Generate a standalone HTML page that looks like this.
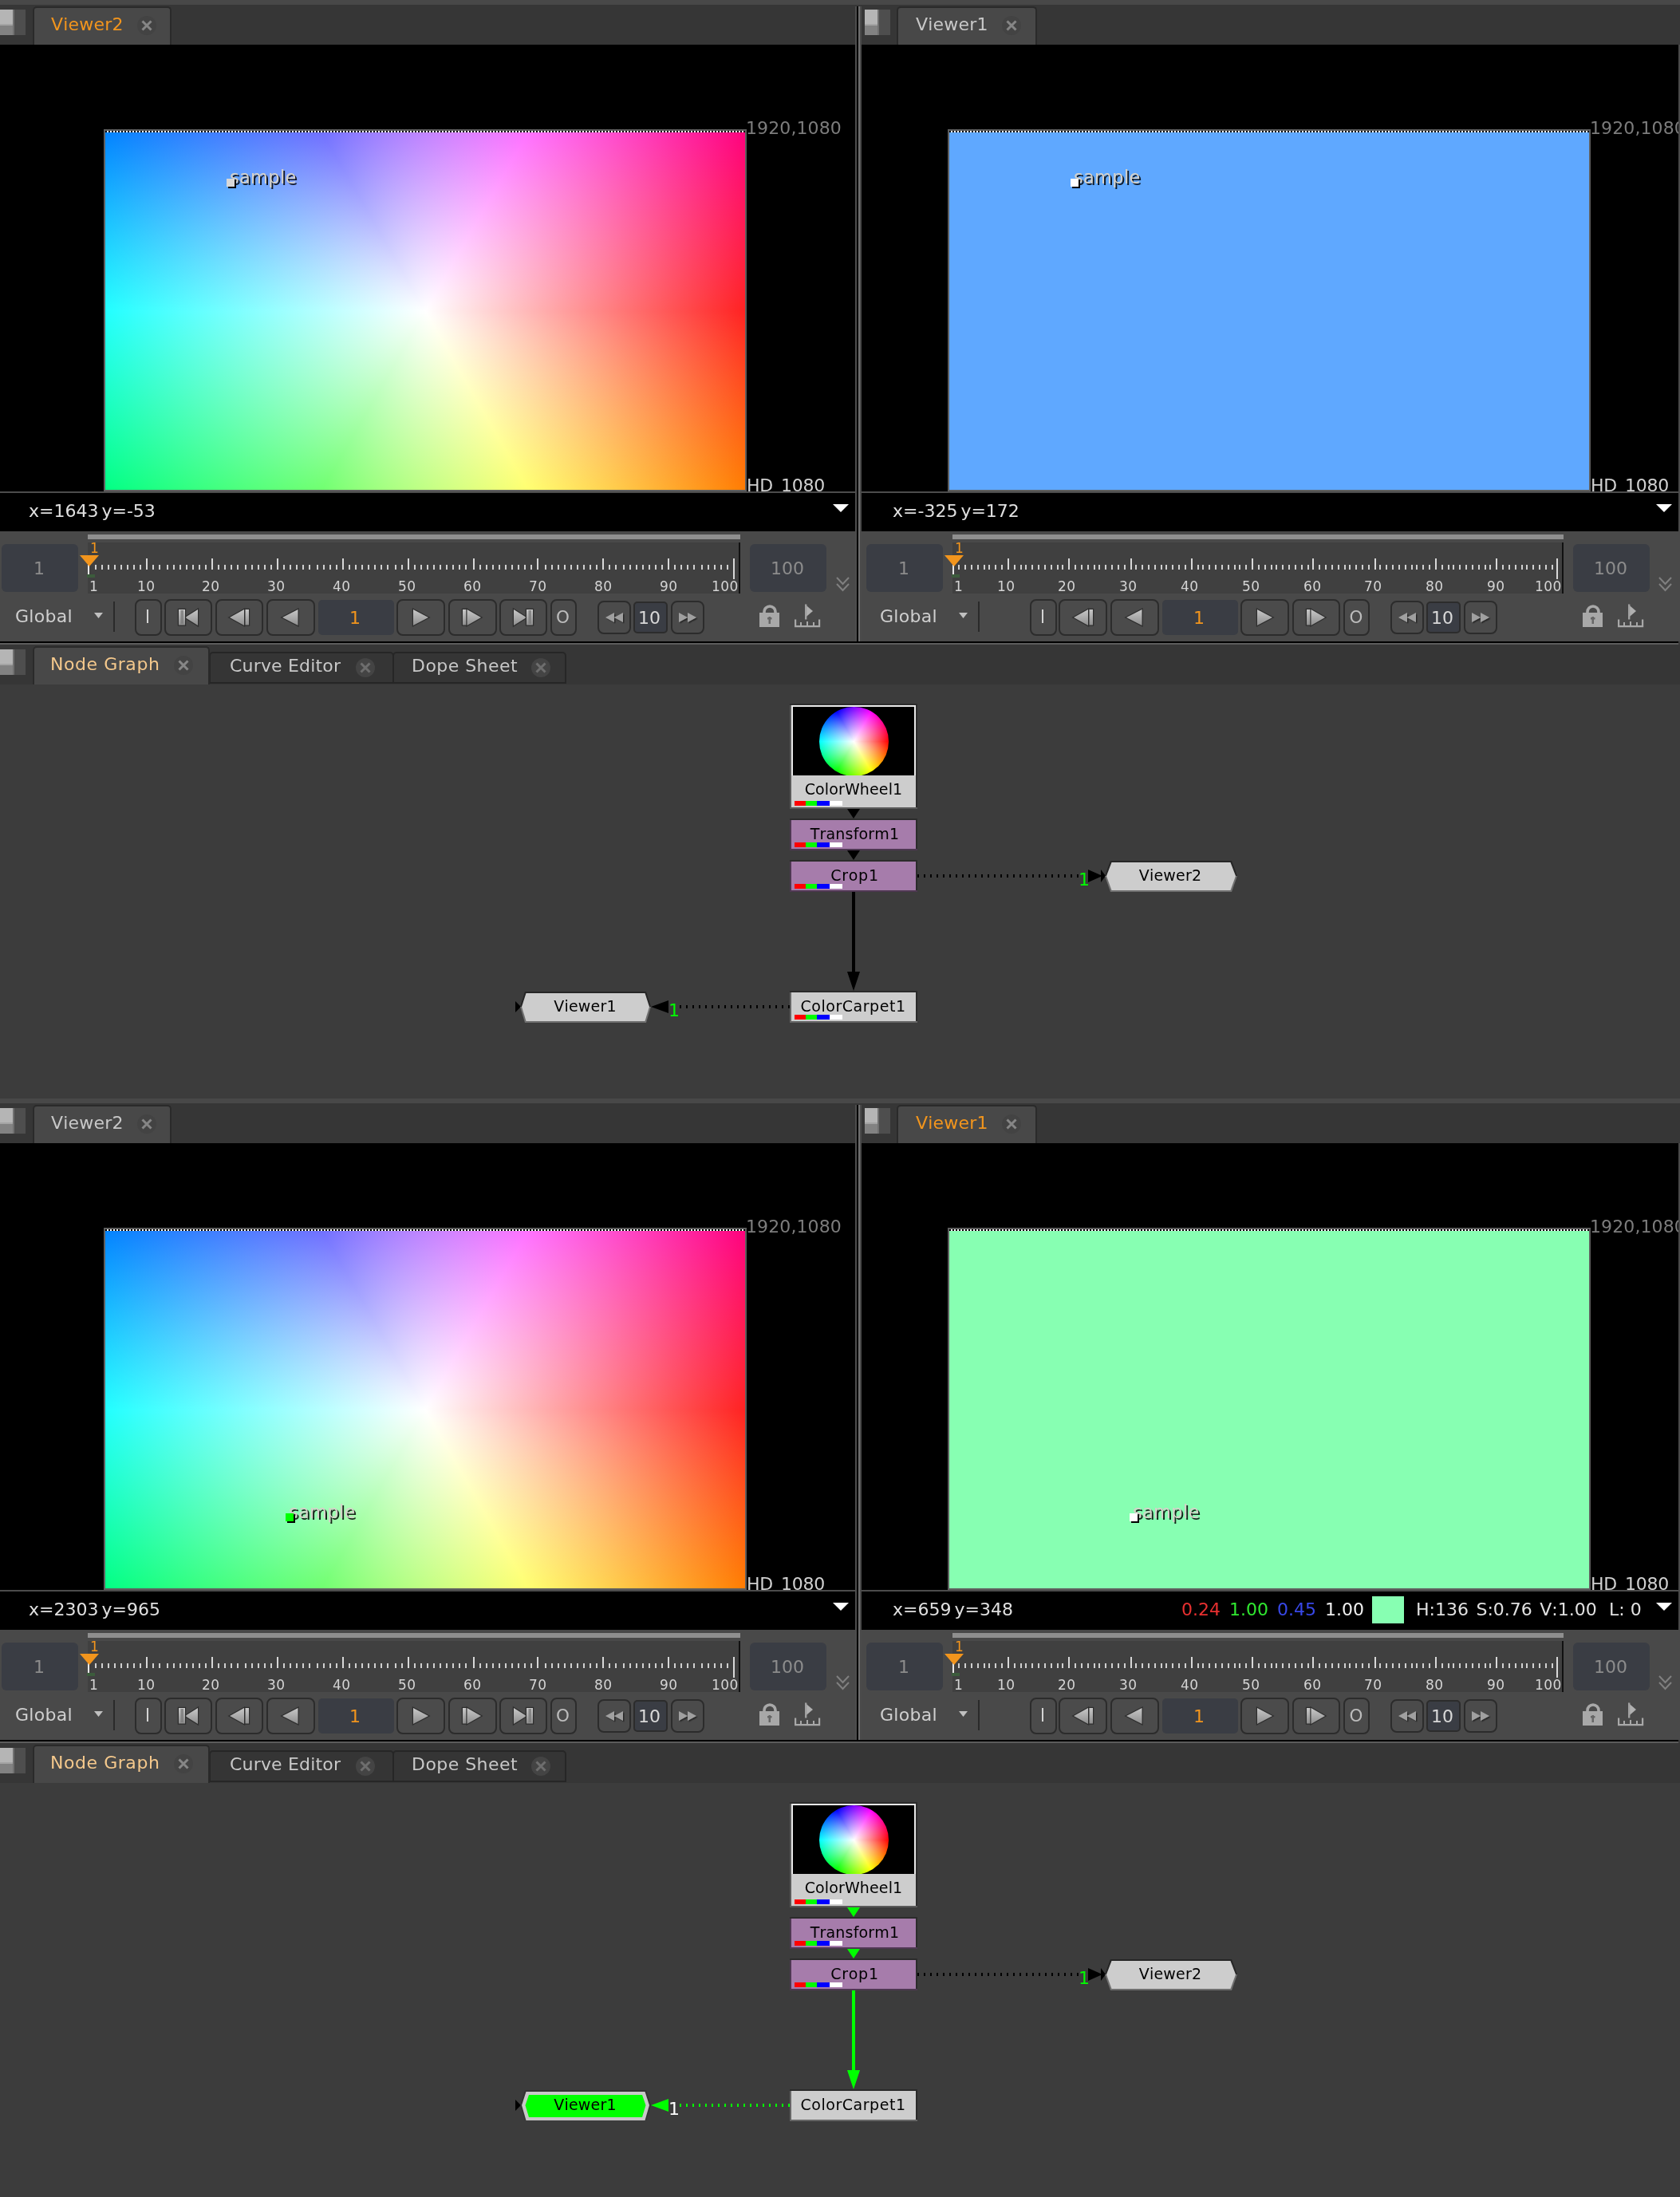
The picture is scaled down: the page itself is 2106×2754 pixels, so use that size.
<!DOCTYPE html>
<html><head><meta charset="utf-8"><title>Natron</title>
<style>
html,body{margin:0;padding:0;background:#3c3c3c;}
body{width:2106px;height:2754px;overflow:hidden;position:relative;font-family:"DejaVu Sans","Liberation Sans",sans-serif;}
.half{will-change:transform;position:absolute;left:0;width:2106px;height:1377px;overflow:hidden;}
.half div,.half span,.half>svg{position:absolute;}
.half span{line-height:1;white-space:pre;font-kerning:none;}
text{font-kerning:none}
svg{overflow:visible}
</style></head><body>
<svg width="0" height="0" style="position:absolute"><defs><linearGradient id="ig" x1="0" y1="0" x2="0" y2="1"><stop offset="0" stop-color="#c8c8c8"/><stop offset="1" stop-color="#8e8e8e"/></linearGradient>
<filter id="sh" x="-20%" y="-20%" width="150%" height="150%"><feDropShadow dx="1.5" dy="1.5" stdDeviation="0.6" flood-color="#222" flood-opacity="0.9"/></filter>
</defs></svg>
<div class="half" style="top:0"><div style="left:0px;top:0px;width:2106px;height:6px;background:#484848"></div><div style="left:0px;top:6px;width:2106px;height:50px;background:#363636"></div><div style="left:0px;top:56px;width:1072px;height:610px;background:#000"></div><div style="left:1080px;top:56px;width:1024px;height:610px;background:#000"></div><div style="left:0px;top:666px;width:2106px;height:138px;background:#494949"></div><div style="left:2104px;top:56px;width:2px;height:610px;background:#494949"></div><div style="left:130px;top:162px;width:806px;height:454px;background:#5e5e5e"></div><div style="left:132px;top:164px;width:802px;height:2px;background:repeating-linear-gradient(90deg,#000 0 2px,#fff 2px 4px)"></div><div style="left:132px;top:166px;width:802px;height:448px;background:radial-gradient(circle 463px at 401px 224px,#fff 0,rgba(255,255,255,0) 100%),conic-gradient(from 90deg at 401px 224px,#f00,#ff0,#0f0,#0ff,#00f,#f0f,#f00)"></div><div style="left:1188px;top:162px;width:806px;height:454px;background:#5e5e5e"></div><div style="left:1190px;top:164px;width:802px;height:2px;background:repeating-linear-gradient(90deg,#000 0 2px,#fff 2px 4px)"></div><div style="left:1190px;top:166px;width:802px;height:448px;background:#5fa8ff"></div><span style="left:935px;top:150.40px;font-size:22px;color:#7c7c7c;letter-spacing:0.1px;">1920,1080</span><span style="left:936px;top:598.40px;font-size:22px;color:#d0d0d0;word-spacing:3px;letter-spacing:-0.2px;">HD 1080</span><div style="left:1993px;top:140px;width:111px;height:40px;overflow:hidden"><span style="left:0;top:10.40px;font-size:22px;color:#7c7c7c;letter-spacing:0.1px">1920,1080</span></div><span style="left:1994px;top:598.40px;font-size:22px;color:#d0d0d0;word-spacing:3px;letter-spacing:-0.2px;">HD 1080</span><div style="left:0px;top:616px;width:1072px;height:2px;background:#4c4c4c"></div><div style="left:1080px;top:616px;width:1024px;height:2px;background:#4c4c4c"></div><span style="left:36px;top:630.40px;font-size:22px;color:#e0e0e0;word-spacing:-3px;">x=1643 y=-53</span><span style="left:1119px;top:630.40px;font-size:22px;color:#e0e0e0;word-spacing:-3px;">x=-325 y=172</span><svg style="left:1044px;top:632px" width="20" height="10" viewBox="0 0 20 10"><path d="M0 0H20L10.0 10Z" fill="#fff"/></svg><svg style="left:2076px;top:632px" width="20" height="10" viewBox="0 0 20 10"><path d="M0 0H20L10.0 10Z" fill="#fff"/></svg><span style="left:288px;top:211.00px;font-size:22.5px;color:#d6d2ca;text-shadow:2px 2px 0 rgba(0,0,0,0.85);letter-spacing:0.3px;">sample</span><div style="left:286px;top:226px;width:10px;height:10px;background:#000"></div><div style="left:284px;top:224px;width:10px;height:10px;background:#d8d8d8"></div><span style="left:1346px;top:211.00px;font-size:22.5px;color:#d6d2ca;text-shadow:2px 2px 0 rgba(0,0,0,0.85);letter-spacing:0.3px;">sample</span><div style="left:1344px;top:226px;width:10px;height:10px;background:#000"></div><div style="left:1342px;top:224px;width:10px;height:10px;background:#fff"></div><div style="left:1072px;top:8px;width:2px;height:796px;background:#4d4d4d"></div><div style="left:1074px;top:8px;width:2px;height:796px;background:#000"></div><div style="left:1076px;top:8px;width:2px;height:796px;background:#6e6e6e"></div><div style="left:1078px;top:8px;width:2px;height:796px;background:#4a4a4a"></div><div style="left:0px;top:12px;width:16px;height:20px;background:#b5b5b5"></div><div style="left:0px;top:30px;width:16px;height:2px;background:#a4a4a4"></div><div style="left:0px;top:32px;width:16px;height:12px;background:#828282"></div><div style="left:16px;top:12px;width:2px;height:32px;background:#707070"></div><div style="left:18px;top:12px;width:14px;height:32px;background:#4e4e4e"></div><div style="left:1084px;top:12px;width:16px;height:20px;background:#b5b5b5"></div><div style="left:1084px;top:30px;width:16px;height:2px;background:#a4a4a4"></div><div style="left:1084px;top:32px;width:16px;height:12px;background:#828282"></div><div style="left:1100px;top:12px;width:2px;height:32px;background:#707070"></div><div style="left:1102px;top:12px;width:14px;height:32px;background:#4e4e4e"></div><div style="left:41px;top:8px;width:174px;height:48px;box-sizing:border-box;background:#484848;border:2px solid #2a2a2a;border-bottom:none;border-radius:5px 5px 0 0"></div><span style="left:64px;top:20.40px;font-size:22px;color:#f2951d;letter-spacing:0.2px;">Viewer2</span><svg style="left:170px;top:18px" width="28" height="28" viewBox="0 0 28 28"><circle cx="14" cy="14" r="12" fill="#434343"/><path d="M8.5 8.5L19.5 19.5M19.5 8.5L8.5 19.5" stroke="#868686" stroke-width="3" fill="none"/></svg><div style="left:1124px;top:8px;width:176px;height:48px;box-sizing:border-box;background:#484848;border:2px solid #2a2a2a;border-bottom:none;border-radius:5px 5px 0 0"></div><span style="left:1148px;top:20.40px;font-size:22px;color:#c8c8c8;letter-spacing:0.2px;">Viewer1</span><svg style="left:1254px;top:18px" width="28" height="28" viewBox="0 0 28 28"><circle cx="14" cy="14" r="12" fill="#434343"/><path d="M8.5 8.5L19.5 19.5M19.5 8.5L8.5 19.5" stroke="#868686" stroke-width="3" fill="none"/></svg><div style="left:2px;top:682px;width:96px;height:60px;background:#3a3d44;border-radius:6px"></div><span style="left:-151px;width:400px;text-align:center;top:702.40px;font-size:22px;color:#8c8c8c;">1</span><div style="left:110px;top:670px;width:818px;height:6px;background:#8f8f8f"></div><div style="left:110px;top:680px;width:818px;height:64px;background:#404040"></div><div style="left:926px;top:680px;width:2px;height:64px;background:#111"></div><svg style="left:110px;top:680px" width="818" height="64"><rect x="9" y="28" width="2" height="6" fill="#d0d0d0"/><rect x="17" y="28" width="2" height="6" fill="#d0d0d0"/><rect x="25" y="28" width="2" height="6" fill="#d0d0d0"/><rect x="33" y="28" width="2" height="6" fill="#d0d0d0"/><rect x="41" y="28" width="2" height="6" fill="#d0d0d0"/><rect x="49" y="28" width="2" height="6" fill="#d0d0d0"/><rect x="57" y="28" width="2" height="6" fill="#d0d0d0"/><rect x="65" y="28" width="2" height="6" fill="#d0d0d0"/><rect x="73" y="20" width="2" height="14" fill="#d8d8d8"/><rect x="81" y="28" width="2" height="6" fill="#d0d0d0"/><rect x="89" y="28" width="2" height="6" fill="#d0d0d0"/><rect x="99" y="28" width="2" height="6" fill="#d0d0d0"/><rect x="107" y="28" width="2" height="6" fill="#d0d0d0"/><rect x="115" y="28" width="2" height="6" fill="#d0d0d0"/><rect x="123" y="28" width="2" height="6" fill="#d0d0d0"/><rect x="131" y="28" width="2" height="6" fill="#d0d0d0"/><rect x="139" y="28" width="2" height="6" fill="#d0d0d0"/><rect x="147" y="28" width="2" height="6" fill="#d0d0d0"/><rect x="155" y="20" width="2" height="14" fill="#d8d8d8"/><rect x="163" y="28" width="2" height="6" fill="#d0d0d0"/><rect x="171" y="28" width="2" height="6" fill="#d0d0d0"/><rect x="179" y="28" width="2" height="6" fill="#d0d0d0"/><rect x="187" y="28" width="2" height="6" fill="#d0d0d0"/><rect x="197" y="28" width="2" height="6" fill="#d0d0d0"/><rect x="205" y="28" width="2" height="6" fill="#d0d0d0"/><rect x="213" y="28" width="2" height="6" fill="#d0d0d0"/><rect x="221" y="28" width="2" height="6" fill="#d0d0d0"/><rect x="229" y="28" width="2" height="6" fill="#d0d0d0"/><rect x="237" y="20" width="2" height="14" fill="#d8d8d8"/><rect x="245" y="28" width="2" height="6" fill="#d0d0d0"/><rect x="253" y="28" width="2" height="6" fill="#d0d0d0"/><rect x="261" y="28" width="2" height="6" fill="#d0d0d0"/><rect x="269" y="28" width="2" height="6" fill="#d0d0d0"/><rect x="277" y="28" width="2" height="6" fill="#d0d0d0"/><rect x="287" y="28" width="2" height="6" fill="#d0d0d0"/><rect x="295" y="28" width="2" height="6" fill="#d0d0d0"/><rect x="303" y="28" width="2" height="6" fill="#d0d0d0"/><rect x="311" y="28" width="2" height="6" fill="#d0d0d0"/><rect x="319" y="20" width="2" height="14" fill="#d8d8d8"/><rect x="327" y="28" width="2" height="6" fill="#d0d0d0"/><rect x="335" y="28" width="2" height="6" fill="#d0d0d0"/><rect x="343" y="28" width="2" height="6" fill="#d0d0d0"/><rect x="351" y="28" width="2" height="6" fill="#d0d0d0"/><rect x="359" y="28" width="2" height="6" fill="#d0d0d0"/><rect x="367" y="28" width="2" height="6" fill="#d0d0d0"/><rect x="375" y="28" width="2" height="6" fill="#d0d0d0"/><rect x="385" y="28" width="2" height="6" fill="#d0d0d0"/><rect x="393" y="28" width="2" height="6" fill="#d0d0d0"/><rect x="401" y="20" width="2" height="14" fill="#d8d8d8"/><rect x="409" y="28" width="2" height="6" fill="#d0d0d0"/><rect x="417" y="28" width="2" height="6" fill="#d0d0d0"/><rect x="425" y="28" width="2" height="6" fill="#d0d0d0"/><rect x="433" y="28" width="2" height="6" fill="#d0d0d0"/><rect x="441" y="28" width="2" height="6" fill="#d0d0d0"/><rect x="449" y="28" width="2" height="6" fill="#d0d0d0"/><rect x="457" y="28" width="2" height="6" fill="#d0d0d0"/><rect x="465" y="28" width="2" height="6" fill="#d0d0d0"/><rect x="473" y="28" width="2" height="6" fill="#d0d0d0"/><rect x="483" y="20" width="2" height="14" fill="#d8d8d8"/><rect x="491" y="28" width="2" height="6" fill="#d0d0d0"/><rect x="499" y="28" width="2" height="6" fill="#d0d0d0"/><rect x="507" y="28" width="2" height="6" fill="#d0d0d0"/><rect x="515" y="28" width="2" height="6" fill="#d0d0d0"/><rect x="523" y="28" width="2" height="6" fill="#d0d0d0"/><rect x="531" y="28" width="2" height="6" fill="#d0d0d0"/><rect x="539" y="28" width="2" height="6" fill="#d0d0d0"/><rect x="547" y="28" width="2" height="6" fill="#d0d0d0"/><rect x="555" y="28" width="2" height="6" fill="#d0d0d0"/><rect x="563" y="20" width="2" height="14" fill="#d8d8d8"/><rect x="573" y="28" width="2" height="6" fill="#d0d0d0"/><rect x="581" y="28" width="2" height="6" fill="#d0d0d0"/><rect x="589" y="28" width="2" height="6" fill="#d0d0d0"/><rect x="597" y="28" width="2" height="6" fill="#d0d0d0"/><rect x="605" y="28" width="2" height="6" fill="#d0d0d0"/><rect x="613" y="28" width="2" height="6" fill="#d0d0d0"/><rect x="621" y="28" width="2" height="6" fill="#d0d0d0"/><rect x="629" y="28" width="2" height="6" fill="#d0d0d0"/><rect x="637" y="28" width="2" height="6" fill="#d0d0d0"/><rect x="645" y="20" width="2" height="14" fill="#d8d8d8"/><rect x="653" y="28" width="2" height="6" fill="#d0d0d0"/><rect x="661" y="28" width="2" height="6" fill="#d0d0d0"/><rect x="671" y="28" width="2" height="6" fill="#d0d0d0"/><rect x="679" y="28" width="2" height="6" fill="#d0d0d0"/><rect x="687" y="28" width="2" height="6" fill="#d0d0d0"/><rect x="695" y="28" width="2" height="6" fill="#d0d0d0"/><rect x="703" y="28" width="2" height="6" fill="#d0d0d0"/><rect x="711" y="28" width="2" height="6" fill="#d0d0d0"/><rect x="719" y="28" width="2" height="6" fill="#d0d0d0"/><rect x="727" y="20" width="2" height="14" fill="#d8d8d8"/><rect x="735" y="28" width="2" height="6" fill="#d0d0d0"/><rect x="743" y="28" width="2" height="6" fill="#d0d0d0"/><rect x="751" y="28" width="2" height="6" fill="#d0d0d0"/><rect x="759" y="28" width="2" height="6" fill="#d0d0d0"/><rect x="769" y="28" width="2" height="6" fill="#d0d0d0"/><rect x="777" y="28" width="2" height="6" fill="#d0d0d0"/><rect x="785" y="28" width="2" height="6" fill="#d0d0d0"/><rect x="793" y="28" width="2" height="6" fill="#d0d0d0"/><rect x="801" y="28" width="2" height="6" fill="#d0d0d0"/><rect x="809" y="20" width="2" height="26" fill="#d8d8d8"/></svg><div style="left:110px;top:708px;width:2px;height:14px;background:#e8e8e8"></div><div style="left:109px;top:720px;width:10px;height:4px;background:#3c5c3c"></div><svg style="left:100px;top:696px" width="24" height="14" viewBox="0 0 24 14"><path d="M0 0H24L12.0 14Z" fill="#f2951d"/></svg><span style="left:113px;top:679.40px;font-size:17px;color:#f2951d;">1</span><span style="left:112px;top:727.40px;font-size:17px;color:#d4d4d4;letter-spacing:0.4px;">1</span><span style="left:172px;top:727.40px;font-size:17px;color:#d4d4d4;letter-spacing:0.4px;">10</span><span style="left:253px;top:727.40px;font-size:17px;color:#d4d4d4;letter-spacing:0.4px;">20</span><span style="left:335px;top:727.40px;font-size:17px;color:#d4d4d4;letter-spacing:0.4px;">30</span><span style="left:417px;top:727.40px;font-size:17px;color:#d4d4d4;letter-spacing:0.4px;">40</span><span style="left:499px;top:727.40px;font-size:17px;color:#d4d4d4;letter-spacing:0.4px;">50</span><span style="left:581px;top:727.40px;font-size:17px;color:#d4d4d4;letter-spacing:0.4px;">60</span><span style="left:663px;top:727.40px;font-size:17px;color:#d4d4d4;letter-spacing:0.4px;">70</span><span style="left:745px;top:727.40px;font-size:17px;color:#d4d4d4;letter-spacing:0.4px;">80</span><span style="left:827px;top:727.40px;font-size:17px;color:#d4d4d4;letter-spacing:0.4px;">90</span><span style="left:892px;top:727.40px;font-size:17px;color:#d4d4d4;letter-spacing:0.4px;">100</span><div style="left:940px;top:682px;width:96px;height:60px;background:#3a3d44;border-radius:6px"></div><span style="left:787px;width:400px;text-align:center;top:702.40px;font-size:22px;color:#8c8c8c;">100</span><svg style="left:1048px;top:722px" width="18" height="22" viewBox="0 0 18 22"><path d="M1 2L8.5 10L16 2M1 10L8.5 18L16 10" fill="none" stroke="#808080" stroke-width="2"/></svg><span style="left:19px;top:762.40px;font-size:22px;color:#cfcfcf;letter-spacing:0.3px;">Global</span><svg style="left:118px;top:768px" width="11" height="7" viewBox="0 0 11 7"><path d="M0 0H11L5.5 7Z" fill="#c0c0c0"/></svg><div style="left:142px;top:754px;width:2px;height:38px;background:#2a2a2a"></div><div style="left:169px;top:751px;width:34px;height:46px;box-sizing:border-box;border:2px solid #2c2c2c;border-radius:8px;background:#4b4b4b"></div><div style="left:206px;top:751px;width:60px;height:46px;box-sizing:border-box;border:2px solid #2c2c2c;border-radius:8px;background:#4b4b4b"></div><div style="left:270px;top:751px;width:60px;height:46px;box-sizing:border-box;border:2px solid #2c2c2c;border-radius:8px;background:#4b4b4b"></div><div style="left:334px;top:751px;width:61px;height:46px;box-sizing:border-box;border:2px solid #2c2c2c;border-radius:8px;background:#4b4b4b"></div><div style="left:497px;top:751px;width:61px;height:46px;box-sizing:border-box;border:2px solid #2c2c2c;border-radius:8px;background:#4b4b4b"></div><div style="left:562px;top:751px;width:61px;height:46px;box-sizing:border-box;border:2px solid #2c2c2c;border-radius:8px;background:#4b4b4b"></div><div style="left:626px;top:751px;width:60px;height:46px;box-sizing:border-box;border:2px solid #2c2c2c;border-radius:8px;background:#4b4b4b"></div><div style="left:690px;top:751px;width:33px;height:46px;box-sizing:border-box;border:2px solid #2c2c2c;border-radius:8px;background:#4b4b4b"></div><div style="left:184px;top:764px;width:2px;height:17px;background:#d4d4d4"></div><svg style="left:220px;top:760px" width="40" height="28" viewBox="-4 -4 40 28"><path d="M24 0V20L8 10Z" fill="url(#ig)" stroke="#2e2e2e" stroke-width="2.4" paint-order="stroke" stroke-linejoin="miter"/><rect x="0" y="0" width="8" height="19.5" fill="url(#ig)" stroke="#2e2e2e" stroke-width="2.4" paint-order="stroke" stroke-linejoin="miter"/><rect x="2.5" y="1" width="3.5" height="17" fill="#7a7a7a" opacity="0.8"/></svg><svg style="left:284px;top:760px" width="40" height="28" viewBox="-4 -4 40 28"><path d="M18 0V20L0 10Z" fill="url(#ig)" stroke="#2e2e2e" stroke-width="2.4" paint-order="stroke" stroke-linejoin="miter"/><rect x="19.5" y="0" width="4.5" height="19.5" fill="url(#ig)" stroke="#2e2e2e" stroke-width="2.4" paint-order="stroke" stroke-linejoin="miter"/></svg><svg style="left:350px;top:760px" width="40" height="28" viewBox="-4 -4 40 28"><path d="M19.5 0V20L0 10Z" fill="url(#ig)" stroke="#2e2e2e" stroke-width="2.4" paint-order="stroke" stroke-linejoin="miter"/></svg><div style="left:399px;top:752px;width:95px;height:44px;background:#3a3d44;border-radius:5px"></div><span style="left:245px;width:400px;text-align:center;top:764.40px;font-size:22px;color:#f2951d;">1</span><svg style="left:514px;top:760px" width="40" height="28" viewBox="-4 -4 40 28"><path d="M0 0V20L19 10Z" fill="url(#ig)" stroke="#2e2e2e" stroke-width="2.4" paint-order="stroke" stroke-linejoin="miter"/></svg><svg style="left:576px;top:760px" width="40" height="28" viewBox="-4 -4 40 28"><rect x="0" y="0" width="5" height="19.5" fill="url(#ig)" stroke="#2e2e2e" stroke-width="2.4" paint-order="stroke" stroke-linejoin="miter"/><path d="M5.5 0V20L23 10Z" fill="url(#ig)" stroke="#2e2e2e" stroke-width="2.4" paint-order="stroke" stroke-linejoin="miter"/></svg><svg style="left:640px;top:760px" width="40" height="28" viewBox="-4 -4 40 28"><path d="M0 0V20L16 10Z" fill="url(#ig)" stroke="#2e2e2e" stroke-width="2.4" paint-order="stroke" stroke-linejoin="miter"/><rect x="16" y="0" width="8" height="19.5" fill="url(#ig)" stroke="#2e2e2e" stroke-width="2.4" paint-order="stroke" stroke-linejoin="miter"/><rect x="18.5" y="1" width="3.5" height="17" fill="#7a7a7a" opacity="0.8"/></svg><span style="left:505.5px;width:400px;text-align:center;top:762.80px;font-size:21.5px;color:#bcbcbc;">O</span><div style="left:749px;top:753px;width:42px;height:42px;box-sizing:border-box;border:2px solid #2c2c2c;border-radius:8px;background:#4b4b4b"></div><svg style="left:759px;top:768px" width="24" height="15" viewBox="0 0 24 15"><g filter="url(#sh)"><path d="M11 0V12L0 6ZM22 0V12L11 6Z" fill="#a0a0a0"/></g></svg><div style="left:794px;top:754px;width:43px;height:40px;box-sizing:border-box;background:#3a3d44;border:2px solid #2c2c2c;border-radius:5px"></div><span style="left:614px;width:400px;text-align:center;top:764.40px;font-size:22px;color:#d8d8d8;">10</span><div style="left:841px;top:753px;width:42px;height:42px;box-sizing:border-box;border:2px solid #2c2c2c;border-radius:8px;background:#4b4b4b"></div><svg style="left:851px;top:768px" width="24" height="15" viewBox="0 0 24 15"><g filter="url(#sh)"><path d="M0 0V12L11 6ZM11 0V12L22 6Z" fill="#a0a0a0"/></g></svg><svg style="left:952px;top:758px" width="26" height="30" viewBox="0 0 26 30"><path d="M6 12V9a7 7 0 0 1 14 0V12" fill="none" stroke="#a8a8a8" stroke-width="3.6"/><rect x="0" y="10" width="25" height="18" fill="#a8a8a8"/><rect x="11.5" y="15" width="2.5" height="9" fill="#666"/><rect x="10" y="16" width="5.5" height="2.5" fill="#666"/></svg><svg style="left:996px;top:757px" width="34" height="32" viewBox="0 0 34 32"><path d="M13 0.5L23 9L13 17.5Z" fill="#b0b0b0"/><rect x="13" y="0.5" width="2.4" height="19" fill="#a0a0a0"/><path d="M0 19.5H2.2V27H30V19.5H32.2V29.2H0Z" fill="#a8a8a8"/><path d="M7 23H9V28H7ZM15 22H17V28H15ZM23 23H25V28H23Z" fill="#a8a8a8"/></svg><div style="left:1086px;top:682px;width:96px;height:60px;background:#3a3d44;border-radius:6px"></div><span style="left:933px;width:400px;text-align:center;top:702.40px;font-size:22px;color:#8c8c8c;">1</span><div style="left:1194px;top:670px;width:766px;height:6px;background:#8f8f8f"></div><div style="left:1194px;top:680px;width:766px;height:64px;background:#404040"></div><div style="left:1958px;top:680px;width:2px;height:64px;background:#111"></div><svg style="left:1194px;top:680px" width="766" height="64"><rect x="7" y="28" width="2" height="6" fill="#d0d0d0"/><rect x="15" y="28" width="2" height="6" fill="#d0d0d0"/><rect x="23" y="28" width="2" height="6" fill="#d0d0d0"/><rect x="31" y="28" width="2" height="6" fill="#d0d0d0"/><rect x="39" y="28" width="2" height="6" fill="#d0d0d0"/><rect x="45" y="28" width="2" height="6" fill="#d0d0d0"/><rect x="53" y="28" width="2" height="6" fill="#d0d0d0"/><rect x="61" y="28" width="2" height="6" fill="#d0d0d0"/><rect x="69" y="20" width="2" height="14" fill="#d8d8d8"/><rect x="77" y="28" width="2" height="6" fill="#d0d0d0"/><rect x="85" y="28" width="2" height="6" fill="#d0d0d0"/><rect x="91" y="28" width="2" height="6" fill="#d0d0d0"/><rect x="99" y="28" width="2" height="6" fill="#d0d0d0"/><rect x="107" y="28" width="2" height="6" fill="#d0d0d0"/><rect x="115" y="28" width="2" height="6" fill="#d0d0d0"/><rect x="123" y="28" width="2" height="6" fill="#d0d0d0"/><rect x="131" y="28" width="2" height="6" fill="#d0d0d0"/><rect x="137" y="28" width="2" height="6" fill="#d0d0d0"/><rect x="145" y="20" width="2" height="14" fill="#d8d8d8"/><rect x="153" y="28" width="2" height="6" fill="#d0d0d0"/><rect x="161" y="28" width="2" height="6" fill="#d0d0d0"/><rect x="169" y="28" width="2" height="6" fill="#d0d0d0"/><rect x="177" y="28" width="2" height="6" fill="#d0d0d0"/><rect x="183" y="28" width="2" height="6" fill="#d0d0d0"/><rect x="191" y="28" width="2" height="6" fill="#d0d0d0"/><rect x="199" y="28" width="2" height="6" fill="#d0d0d0"/><rect x="207" y="28" width="2" height="6" fill="#d0d0d0"/><rect x="215" y="28" width="2" height="6" fill="#d0d0d0"/><rect x="223" y="20" width="2" height="14" fill="#d8d8d8"/><rect x="229" y="28" width="2" height="6" fill="#d0d0d0"/><rect x="237" y="28" width="2" height="6" fill="#d0d0d0"/><rect x="245" y="28" width="2" height="6" fill="#d0d0d0"/><rect x="253" y="28" width="2" height="6" fill="#d0d0d0"/><rect x="261" y="28" width="2" height="6" fill="#d0d0d0"/><rect x="267" y="28" width="2" height="6" fill="#d0d0d0"/><rect x="275" y="28" width="2" height="6" fill="#d0d0d0"/><rect x="283" y="28" width="2" height="6" fill="#d0d0d0"/><rect x="291" y="28" width="2" height="6" fill="#d0d0d0"/><rect x="299" y="20" width="2" height="14" fill="#d8d8d8"/><rect x="307" y="28" width="2" height="6" fill="#d0d0d0"/><rect x="313" y="28" width="2" height="6" fill="#d0d0d0"/><rect x="321" y="28" width="2" height="6" fill="#d0d0d0"/><rect x="329" y="28" width="2" height="6" fill="#d0d0d0"/><rect x="337" y="28" width="2" height="6" fill="#d0d0d0"/><rect x="345" y="28" width="2" height="6" fill="#d0d0d0"/><rect x="353" y="28" width="2" height="6" fill="#d0d0d0"/><rect x="359" y="28" width="2" height="6" fill="#d0d0d0"/><rect x="367" y="28" width="2" height="6" fill="#d0d0d0"/><rect x="375" y="20" width="2" height="14" fill="#d8d8d8"/><rect x="383" y="28" width="2" height="6" fill="#d0d0d0"/><rect x="391" y="28" width="2" height="6" fill="#d0d0d0"/><rect x="399" y="28" width="2" height="6" fill="#d0d0d0"/><rect x="405" y="28" width="2" height="6" fill="#d0d0d0"/><rect x="413" y="28" width="2" height="6" fill="#d0d0d0"/><rect x="421" y="28" width="2" height="6" fill="#d0d0d0"/><rect x="429" y="28" width="2" height="6" fill="#d0d0d0"/><rect x="437" y="28" width="2" height="6" fill="#d0d0d0"/><rect x="445" y="28" width="2" height="6" fill="#d0d0d0"/><rect x="451" y="20" width="2" height="14" fill="#d8d8d8"/><rect x="459" y="28" width="2" height="6" fill="#d0d0d0"/><rect x="467" y="28" width="2" height="6" fill="#d0d0d0"/><rect x="475" y="28" width="2" height="6" fill="#d0d0d0"/><rect x="483" y="28" width="2" height="6" fill="#d0d0d0"/><rect x="491" y="28" width="2" height="6" fill="#d0d0d0"/><rect x="497" y="28" width="2" height="6" fill="#d0d0d0"/><rect x="505" y="28" width="2" height="6" fill="#d0d0d0"/><rect x="513" y="28" width="2" height="6" fill="#d0d0d0"/><rect x="521" y="28" width="2" height="6" fill="#d0d0d0"/><rect x="529" y="20" width="2" height="14" fill="#d8d8d8"/><rect x="535" y="28" width="2" height="6" fill="#d0d0d0"/><rect x="543" y="28" width="2" height="6" fill="#d0d0d0"/><rect x="551" y="28" width="2" height="6" fill="#d0d0d0"/><rect x="559" y="28" width="2" height="6" fill="#d0d0d0"/><rect x="567" y="28" width="2" height="6" fill="#d0d0d0"/><rect x="575" y="28" width="2" height="6" fill="#d0d0d0"/><rect x="581" y="28" width="2" height="6" fill="#d0d0d0"/><rect x="589" y="28" width="2" height="6" fill="#d0d0d0"/><rect x="597" y="28" width="2" height="6" fill="#d0d0d0"/><rect x="605" y="20" width="2" height="14" fill="#d8d8d8"/><rect x="613" y="28" width="2" height="6" fill="#d0d0d0"/><rect x="621" y="28" width="2" height="6" fill="#d0d0d0"/><rect x="627" y="28" width="2" height="6" fill="#d0d0d0"/><rect x="635" y="28" width="2" height="6" fill="#d0d0d0"/><rect x="643" y="28" width="2" height="6" fill="#d0d0d0"/><rect x="651" y="28" width="2" height="6" fill="#d0d0d0"/><rect x="659" y="28" width="2" height="6" fill="#d0d0d0"/><rect x="667" y="28" width="2" height="6" fill="#d0d0d0"/><rect x="673" y="28" width="2" height="6" fill="#d0d0d0"/><rect x="681" y="20" width="2" height="14" fill="#d8d8d8"/><rect x="689" y="28" width="2" height="6" fill="#d0d0d0"/><rect x="697" y="28" width="2" height="6" fill="#d0d0d0"/><rect x="705" y="28" width="2" height="6" fill="#d0d0d0"/><rect x="713" y="28" width="2" height="6" fill="#d0d0d0"/><rect x="719" y="28" width="2" height="6" fill="#d0d0d0"/><rect x="727" y="28" width="2" height="6" fill="#d0d0d0"/><rect x="735" y="28" width="2" height="6" fill="#d0d0d0"/><rect x="743" y="28" width="2" height="6" fill="#d0d0d0"/><rect x="751" y="28" width="2" height="6" fill="#d0d0d0"/><rect x="757" y="20" width="2" height="26" fill="#d8d8d8"/></svg><div style="left:1194px;top:708px;width:2px;height:14px;background:#e8e8e8"></div><div style="left:1193px;top:720px;width:10px;height:4px;background:#3c5c3c"></div><svg style="left:1184px;top:696px" width="24" height="14" viewBox="0 0 24 14"><path d="M0 0H24L12.0 14Z" fill="#f2951d"/></svg><span style="left:1197px;top:679.40px;font-size:17px;color:#f2951d;">1</span><span style="left:1196px;top:727.40px;font-size:17px;color:#d4d4d4;letter-spacing:0.4px;">1</span><span style="left:1250px;top:727.40px;font-size:17px;color:#d4d4d4;letter-spacing:0.4px;">10</span><span style="left:1326px;top:727.40px;font-size:17px;color:#d4d4d4;letter-spacing:0.4px;">20</span><span style="left:1403px;top:727.40px;font-size:17px;color:#d4d4d4;letter-spacing:0.4px;">30</span><span style="left:1480px;top:727.40px;font-size:17px;color:#d4d4d4;letter-spacing:0.4px;">40</span><span style="left:1557px;top:727.40px;font-size:17px;color:#d4d4d4;letter-spacing:0.4px;">50</span><span style="left:1634px;top:727.40px;font-size:17px;color:#d4d4d4;letter-spacing:0.4px;">60</span><span style="left:1710px;top:727.40px;font-size:17px;color:#d4d4d4;letter-spacing:0.4px;">70</span><span style="left:1787px;top:727.40px;font-size:17px;color:#d4d4d4;letter-spacing:0.4px;">80</span><span style="left:1864px;top:727.40px;font-size:17px;color:#d4d4d4;letter-spacing:0.4px;">90</span><span style="left:1924px;top:727.40px;font-size:17px;color:#d4d4d4;letter-spacing:0.4px;">100</span><div style="left:1972px;top:682px;width:96px;height:60px;background:#3a3d44;border-radius:6px"></div><span style="left:1819px;width:400px;text-align:center;top:702.40px;font-size:22px;color:#8c8c8c;">100</span><svg style="left:2079px;top:722px" width="18" height="22" viewBox="0 0 18 22"><path d="M1 2L8.5 10L16 2M1 10L8.5 18L16 10" fill="none" stroke="#808080" stroke-width="2"/></svg><span style="left:1103px;top:762.40px;font-size:22px;color:#cfcfcf;letter-spacing:0.3px;">Global</span><svg style="left:1202px;top:768px" width="11" height="7" viewBox="0 0 11 7"><path d="M0 0H11L5.5 7Z" fill="#c0c0c0"/></svg><div style="left:1226px;top:754px;width:2px;height:38px;background:#2a2a2a"></div><div style="left:1291px;top:751px;width:34px;height:46px;box-sizing:border-box;border:2px solid #2c2c2c;border-radius:8px;background:#4b4b4b"></div><div style="left:1327px;top:751px;width:61px;height:46px;box-sizing:border-box;border:2px solid #2c2c2c;border-radius:8px;background:#4b4b4b"></div><div style="left:1392px;top:751px;width:61px;height:46px;box-sizing:border-box;border:2px solid #2c2c2c;border-radius:8px;background:#4b4b4b"></div><div style="left:1555px;top:751px;width:61px;height:46px;box-sizing:border-box;border:2px solid #2c2c2c;border-radius:8px;background:#4b4b4b"></div><div style="left:1620px;top:751px;width:60px;height:46px;box-sizing:border-box;border:2px solid #2c2c2c;border-radius:8px;background:#4b4b4b"></div><div style="left:1684px;top:751px;width:33px;height:46px;box-sizing:border-box;border:2px solid #2c2c2c;border-radius:8px;background:#4b4b4b"></div><div style="left:1306px;top:764px;width:2px;height:17px;background:#d4d4d4"></div><svg style="left:1342px;top:760px" width="40" height="28" viewBox="-4 -4 40 28"><path d="M18 0V20L0 10Z" fill="url(#ig)" stroke="#2e2e2e" stroke-width="2.4" paint-order="stroke" stroke-linejoin="miter"/><rect x="19.5" y="0" width="4.5" height="19.5" fill="url(#ig)" stroke="#2e2e2e" stroke-width="2.4" paint-order="stroke" stroke-linejoin="miter"/></svg><svg style="left:1408px;top:760px" width="40" height="28" viewBox="-4 -4 40 28"><path d="M19.5 0V20L0 10Z" fill="url(#ig)" stroke="#2e2e2e" stroke-width="2.4" paint-order="stroke" stroke-linejoin="miter"/></svg><div style="left:1457px;top:752px;width:95px;height:44px;background:#3a3d44;border-radius:5px"></div><span style="left:1303px;width:400px;text-align:center;top:764.40px;font-size:22px;color:#f2951d;">1</span><svg style="left:1572px;top:760px" width="40" height="28" viewBox="-4 -4 40 28"><path d="M0 0V20L19 10Z" fill="url(#ig)" stroke="#2e2e2e" stroke-width="2.4" paint-order="stroke" stroke-linejoin="miter"/></svg><svg style="left:1634px;top:760px" width="40" height="28" viewBox="-4 -4 40 28"><rect x="0" y="0" width="5" height="19.5" fill="url(#ig)" stroke="#2e2e2e" stroke-width="2.4" paint-order="stroke" stroke-linejoin="miter"/><path d="M5.5 0V20L23 10Z" fill="url(#ig)" stroke="#2e2e2e" stroke-width="2.4" paint-order="stroke" stroke-linejoin="miter"/></svg><span style="left:1500px;width:400px;text-align:center;top:762.80px;font-size:21.5px;color:#bcbcbc;">O</span><div style="left:1743px;top:753px;width:42px;height:42px;box-sizing:border-box;border:2px solid #2c2c2c;border-radius:8px;background:#4b4b4b"></div><svg style="left:1753px;top:768px" width="24" height="15" viewBox="0 0 24 15"><g filter="url(#sh)"><path d="M11 0V12L0 6ZM22 0V12L11 6Z" fill="#a0a0a0"/></g></svg><div style="left:1788px;top:754px;width:43px;height:40px;box-sizing:border-box;background:#3a3d44;border:2px solid #2c2c2c;border-radius:5px"></div><span style="left:1608px;width:400px;text-align:center;top:764.40px;font-size:22px;color:#d8d8d8;">10</span><div style="left:1835px;top:753px;width:42px;height:42px;box-sizing:border-box;border:2px solid #2c2c2c;border-radius:8px;background:#4b4b4b"></div><svg style="left:1845px;top:768px" width="24" height="15" viewBox="0 0 24 15"><g filter="url(#sh)"><path d="M0 0V12L11 6ZM11 0V12L22 6Z" fill="#a0a0a0"/></g></svg><svg style="left:1984px;top:758px" width="26" height="30" viewBox="0 0 26 30"><path d="M6 12V9a7 7 0 0 1 14 0V12" fill="none" stroke="#a8a8a8" stroke-width="3.6"/><rect x="0" y="10" width="25" height="18" fill="#a8a8a8"/><rect x="11.5" y="15" width="2.5" height="9" fill="#666"/><rect x="10" y="16" width="5.5" height="2.5" fill="#666"/></svg><svg style="left:2028px;top:757px" width="34" height="32" viewBox="0 0 34 32"><path d="M13 0.5L23 9L13 17.5Z" fill="#b0b0b0"/><rect x="13" y="0.5" width="2.4" height="19" fill="#a0a0a0"/><path d="M0 19.5H2.2V27H30V19.5H32.2V29.2H0Z" fill="#a8a8a8"/><path d="M7 23H9V28H7ZM15 22H17V28H15ZM23 23H25V28H23Z" fill="#a8a8a8"/></svg><div style="left:0px;top:804px;width:2104px;height:2px;background:#000"></div><div style="left:0px;top:806px;width:2104px;height:2px;background:#5c5c5c"></div><div style="left:0px;top:808px;width:2106px;height:50px;background:#363636"></div><div style="left:0px;top:814px;width:16px;height:20px;background:#b5b5b5"></div><div style="left:0px;top:832px;width:16px;height:2px;background:#a4a4a4"></div><div style="left:0px;top:834px;width:16px;height:12px;background:#828282"></div><div style="left:16px;top:814px;width:2px;height:32px;background:#707070"></div><div style="left:18px;top:814px;width:14px;height:32px;background:#4e4e4e"></div><div style="left:262px;top:817px;width:232px;height:40px;box-sizing:border-box;background:#353535;border:2px solid #262626;border-radius:5px 5px 0 0"></div><span style="left:288px;top:824.40px;font-size:22px;color:#c8c8c8;letter-spacing:0.18px;">Curve Editor</span><svg style="left:444px;top:822.5px" width="28" height="28" viewBox="0 0 28 28"><circle cx="14" cy="14" r="12" fill="#444444"/><path d="M8.5 8.5L19.5 19.5M19.5 8.5L8.5 19.5" stroke="#6e6e6e" stroke-width="3" fill="none"/></svg><div style="left:492px;top:817px;width:218px;height:40px;box-sizing:border-box;background:#353535;border:2px solid #262626;border-radius:5px 5px 0 0"></div><span style="left:516px;top:824.40px;font-size:22px;color:#c8c8c8;letter-spacing:0.45px;">Dope Sheet</span><svg style="left:664px;top:822.5px" width="28" height="28" viewBox="0 0 28 28"><circle cx="14" cy="14" r="12" fill="#444444"/><path d="M8.5 8.5L19.5 19.5M19.5 8.5L8.5 19.5" stroke="#6e6e6e" stroke-width="3" fill="none"/></svg><div style="left:41px;top:810px;width:222px;height:48px;box-sizing:border-box;background:#484848;border:2px solid #2a2a2a;border-bottom:none;border-radius:5px 5px 0 0"></div><span style="left:63px;top:822.40px;font-size:22px;color:#f4c88c;letter-spacing:0.55px;">Node Graph</span><svg style="left:216px;top:820px" width="28" height="28" viewBox="0 0 28 28"><circle cx="14" cy="14" r="12" fill="#434343"/><path d="M8.5 8.5L19.5 19.5M19.5 8.5L8.5 19.5" stroke="#868686" stroke-width="3" fill="none"/></svg><div style="left:0px;top:858px;width:2106px;height:519px;background:#3c3c3c"></div><svg style="left:0;top:858px" width="2106" height="519" viewBox="0 858 2106 519" font-family='"DejaVu Sans","Liberation Sans",sans-serif'><rect x="990" y="882" width="160" height="132" fill="#2c2c2c"/><rect x="992" y="884" width="156" height="128" fill="#cdcdcd"/><rect x="992" y="884" width="156" height="2" fill="#e8e8e8"/><rect x="992" y="884" width="2" height="88" fill="#e8e8e8"/><rect x="1146" y="884" width="2" height="88" fill="#e8e8e8"/><rect x="990" y="1012" width="160" height="2" fill="#5a5a5a"/><rect x="990" y="884" width="2" height="130" fill="#5a5a5a"/><rect x="994" y="886" width="152" height="86" fill="#000"/><text x="1070" y="996" font-size="19" fill="#000" text-anchor="middle" letter-spacing="0.12">ColorWheel1</text><rect x="996" y="1004" width="14" height="6" fill="#f00"/><rect x="1010" y="1004" width="14" height="6" fill="#0f0"/><rect x="1024" y="1004" width="16" height="6" fill="#00f"/><rect x="1040" y="1004" width="16" height="6" fill="#fff"/><path d="M1062 1014H1078L1070 1026Z" fill="#000"/><path d="M1062 1066H1078L1070 1078Z" fill="#000"/><rect x="990" y="1026" width="160" height="40" fill="#2c2c2c"/><rect x="992" y="1028" width="156" height="36" fill="#a67cab"/><rect x="990" y="1064" width="160" height="2" fill="#4e3852"/><rect x="990" y="1028" width="2" height="38" fill="#4e3852"/><text x="1071.5" y="1052" font-size="19" fill="#000" text-anchor="middle" letter-spacing="0.2">Transform1</text><rect x="996" y="1056" width="14" height="6" fill="#f00"/><rect x="1010" y="1056" width="14" height="6" fill="#0f0"/><rect x="1024" y="1056" width="16" height="6" fill="#00f"/><rect x="1040" y="1056" width="16" height="6" fill="#fff"/><rect x="990" y="1078" width="160" height="40" fill="#2c2c2c"/><rect x="992" y="1080" width="156" height="36" fill="#a67cab"/><rect x="990" y="1116" width="160" height="2" fill="#4e3852"/><rect x="990" y="1080" width="2" height="38" fill="#4e3852"/><text x="1071.5" y="1104" font-size="19" fill="#000" text-anchor="middle" letter-spacing="0.7">Crop1</text><rect x="996" y="1108" width="14" height="6" fill="#f00"/><rect x="1010" y="1108" width="14" height="6" fill="#0f0"/><rect x="1024" y="1108" width="16" height="6" fill="#00f"/><rect x="1040" y="1108" width="16" height="6" fill="#fff"/><rect x="1068" y="1118" width="4" height="104" fill="#000"/><path d="M1062 1218H1078L1070 1242Z" fill="#000"/><rect x="990" y="1242" width="160" height="40" fill="#2a2a2a"/><rect x="992" y="1244" width="156" height="36" fill="#cdcdcd"/><rect x="990" y="1280" width="160" height="2" fill="#666"/><rect x="990" y="1244" width="2" height="38" fill="#666"/><text x="1069.5" y="1268" font-size="19" fill="#000" text-anchor="middle" letter-spacing="0.55">ColorCarpet1</text><rect x="996" y="1272" width="14" height="6" fill="#f00"/><rect x="1010" y="1272" width="14" height="6" fill="#0f0"/><rect x="1024" y="1272" width="16" height="6" fill="#00f"/><rect x="1040" y="1272" width="16" height="6" fill="#fff"/><path d="M1150 1098H1352" stroke="#000" stroke-width="4" stroke-dasharray="2 6" fill="none"/><path d="M1364 1090V1106L1382 1098ZM1380 1090V1106L1386 1098Z" fill="#000"/><text x="1359" y="1110" font-size="22" fill="#00ff00" text-anchor="middle" letter-spacing="0">1</text><path d="M1385 1098L1392 1079H1544L1551 1098Z" fill="#262626"/><path d="M1385 1098L1392 1118H1544L1551 1098Z" fill="#707070"/><path d="M1387 1098L1393.5 1081H1542.5L1549 1098L1542.5 1116H1393.5Z" fill="#cdcdcd"/><text x="1467" y="1104" font-size="19" fill="#000" text-anchor="middle" letter-spacing="0.2">Viewer2</text><path d="M990 1262H850" stroke="#000" stroke-width="4" stroke-dasharray="2 6" fill="none"/><path d="M838 1254V1270L816 1262Z" fill="#000"/><text x="845" y="1274" font-size="22" fill="#00ff00" text-anchor="middle" letter-spacing="0">1</text><path d="M646 1255V1269L653 1262Z" fill="#000"/><path d="M652 1262L658 1243H810L816 1262Z" fill="#262626"/><path d="M652 1262L658 1282H810L816 1262Z" fill="#707070"/><path d="M654 1262L659.5 1245H808.5L814 1262L808.5 1280H659.5Z" fill="#cdcdcd"/><text x="733.5" y="1268" font-size="19" fill="#000" text-anchor="middle" letter-spacing="0.2">Viewer1</text></svg><div style="left:994px;top:886px;width:152px;height:86px;overflow:hidden"><div style="left:32.5px;top:-0.5px;width:87px;height:87px;border-radius:50%;background:radial-gradient(circle 43.5px at 50% 50%,#fff 0,rgba(255,255,255,0) 100%),conic-gradient(from 90deg,#f00,#ff0,#0f0,#0ff,#00f,#f0f,#f00)"></div></div></div>
<div class="half" style="top:1377px"><div style="left:0px;top:0px;width:2106px;height:6px;background:#484848"></div><div style="left:0px;top:6px;width:2106px;height:50px;background:#363636"></div><div style="left:0px;top:56px;width:1072px;height:610px;background:#000"></div><div style="left:1080px;top:56px;width:1024px;height:610px;background:#000"></div><div style="left:0px;top:666px;width:2106px;height:138px;background:#494949"></div><div style="left:2104px;top:56px;width:2px;height:610px;background:#494949"></div><div style="left:130px;top:162px;width:806px;height:454px;background:#5e5e5e"></div><div style="left:132px;top:164px;width:802px;height:2px;background:repeating-linear-gradient(90deg,#000 0 2px,#fff 2px 4px)"></div><div style="left:132px;top:166px;width:802px;height:448px;background:radial-gradient(circle 463px at 401px 224px,#fff 0,rgba(255,255,255,0) 100%),conic-gradient(from 90deg at 401px 224px,#f00,#ff0,#0f0,#0ff,#00f,#f0f,#f00)"></div><div style="left:1188px;top:162px;width:806px;height:454px;background:#5e5e5e"></div><div style="left:1190px;top:164px;width:802px;height:2px;background:repeating-linear-gradient(90deg,#000 0 2px,#fff 2px 4px)"></div><div style="left:1190px;top:166px;width:802px;height:448px;background:#87ffb2"></div><span style="left:935px;top:150.40px;font-size:22px;color:#7c7c7c;letter-spacing:0.1px;">1920,1080</span><span style="left:936px;top:598.40px;font-size:22px;color:#d0d0d0;word-spacing:3px;letter-spacing:-0.2px;">HD 1080</span><div style="left:1993px;top:140px;width:111px;height:40px;overflow:hidden"><span style="left:0;top:10.40px;font-size:22px;color:#7c7c7c;letter-spacing:0.1px">1920,1080</span></div><span style="left:1994px;top:598.40px;font-size:22px;color:#d0d0d0;word-spacing:3px;letter-spacing:-0.2px;">HD 1080</span><div style="left:0px;top:616px;width:1072px;height:2px;background:#4c4c4c"></div><div style="left:1080px;top:616px;width:1024px;height:2px;background:#4c4c4c"></div><span style="left:36px;top:630.40px;font-size:22px;color:#e0e0e0;word-spacing:-3px;">x=2303 y=965</span><span style="left:1119px;top:630.40px;font-size:22px;color:#e0e0e0;word-spacing:-3px;">x=659 y=348</span><svg style="left:1044px;top:632px" width="20" height="10" viewBox="0 0 20 10"><path d="M0 0H20L10.0 10Z" fill="#fff"/></svg><svg style="left:2076px;top:632px" width="20" height="10" viewBox="0 0 20 10"><path d="M0 0H20L10.0 10Z" fill="#fff"/></svg><span style="left:1481px;top:630.40px;font-size:22px;color:#e83030;">0.24</span><span style="left:1541px;top:630.40px;font-size:22px;color:#30e830;">1.00</span><span style="left:1601px;top:630.40px;font-size:22px;color:#3848e8;">0.45</span><span style="left:1661px;top:630.40px;font-size:22px;color:#f0f0f0;">1.00</span><div style="left:1720px;top:624px;width:40px;height:34px;background:#87ffb2"></div><span style="left:1775px;top:630.40px;font-size:22px;color:#e0e0e0;word-spacing:2.5px;">H:136 S:0.76 V:1.00</span><span style="left:2017px;top:630.40px;font-size:22px;color:#e0e0e0;">L: 0</span><span style="left:362px;top:507.00px;font-size:22.5px;color:#d6d2ca;text-shadow:2px 2px 0 rgba(0,0,0,0.85);letter-spacing:0.3px;">sample</span><div style="left:360px;top:522px;width:10px;height:10px;background:#000"></div><div style="left:358px;top:520px;width:10px;height:10px;background:#00ff00"></div><span style="left:1420px;top:507.00px;font-size:22.5px;color:#d6d2ca;text-shadow:2px 2px 0 rgba(0,0,0,0.85);letter-spacing:0.3px;">sample</span><div style="left:1418px;top:522px;width:10px;height:10px;background:#000"></div><div style="left:1416px;top:520px;width:10px;height:10px;background:#fff"></div><div style="left:1072px;top:8px;width:2px;height:796px;background:#4d4d4d"></div><div style="left:1074px;top:8px;width:2px;height:796px;background:#000"></div><div style="left:1076px;top:8px;width:2px;height:796px;background:#6e6e6e"></div><div style="left:1078px;top:8px;width:2px;height:796px;background:#4a4a4a"></div><div style="left:0px;top:12px;width:16px;height:20px;background:#b5b5b5"></div><div style="left:0px;top:30px;width:16px;height:2px;background:#a4a4a4"></div><div style="left:0px;top:32px;width:16px;height:12px;background:#828282"></div><div style="left:16px;top:12px;width:2px;height:32px;background:#707070"></div><div style="left:18px;top:12px;width:14px;height:32px;background:#4e4e4e"></div><div style="left:1084px;top:12px;width:16px;height:20px;background:#b5b5b5"></div><div style="left:1084px;top:30px;width:16px;height:2px;background:#a4a4a4"></div><div style="left:1084px;top:32px;width:16px;height:12px;background:#828282"></div><div style="left:1100px;top:12px;width:2px;height:32px;background:#707070"></div><div style="left:1102px;top:12px;width:14px;height:32px;background:#4e4e4e"></div><div style="left:41px;top:8px;width:174px;height:48px;box-sizing:border-box;background:#484848;border:2px solid #2a2a2a;border-bottom:none;border-radius:5px 5px 0 0"></div><span style="left:64px;top:20.40px;font-size:22px;color:#c8c8c8;letter-spacing:0.2px;">Viewer2</span><svg style="left:170px;top:18px" width="28" height="28" viewBox="0 0 28 28"><circle cx="14" cy="14" r="12" fill="#434343"/><path d="M8.5 8.5L19.5 19.5M19.5 8.5L8.5 19.5" stroke="#868686" stroke-width="3" fill="none"/></svg><div style="left:1124px;top:8px;width:176px;height:48px;box-sizing:border-box;background:#484848;border:2px solid #2a2a2a;border-bottom:none;border-radius:5px 5px 0 0"></div><span style="left:1148px;top:20.40px;font-size:22px;color:#f2951d;letter-spacing:0.2px;">Viewer1</span><svg style="left:1254px;top:18px" width="28" height="28" viewBox="0 0 28 28"><circle cx="14" cy="14" r="12" fill="#434343"/><path d="M8.5 8.5L19.5 19.5M19.5 8.5L8.5 19.5" stroke="#868686" stroke-width="3" fill="none"/></svg><div style="left:2px;top:682px;width:96px;height:60px;background:#3a3d44;border-radius:6px"></div><span style="left:-151px;width:400px;text-align:center;top:702.40px;font-size:22px;color:#8c8c8c;">1</span><div style="left:110px;top:670px;width:818px;height:6px;background:#8f8f8f"></div><div style="left:110px;top:680px;width:818px;height:64px;background:#404040"></div><div style="left:926px;top:680px;width:2px;height:64px;background:#111"></div><svg style="left:110px;top:680px" width="818" height="64"><rect x="9" y="28" width="2" height="6" fill="#d0d0d0"/><rect x="17" y="28" width="2" height="6" fill="#d0d0d0"/><rect x="25" y="28" width="2" height="6" fill="#d0d0d0"/><rect x="33" y="28" width="2" height="6" fill="#d0d0d0"/><rect x="41" y="28" width="2" height="6" fill="#d0d0d0"/><rect x="49" y="28" width="2" height="6" fill="#d0d0d0"/><rect x="57" y="28" width="2" height="6" fill="#d0d0d0"/><rect x="65" y="28" width="2" height="6" fill="#d0d0d0"/><rect x="73" y="20" width="2" height="14" fill="#d8d8d8"/><rect x="81" y="28" width="2" height="6" fill="#d0d0d0"/><rect x="89" y="28" width="2" height="6" fill="#d0d0d0"/><rect x="99" y="28" width="2" height="6" fill="#d0d0d0"/><rect x="107" y="28" width="2" height="6" fill="#d0d0d0"/><rect x="115" y="28" width="2" height="6" fill="#d0d0d0"/><rect x="123" y="28" width="2" height="6" fill="#d0d0d0"/><rect x="131" y="28" width="2" height="6" fill="#d0d0d0"/><rect x="139" y="28" width="2" height="6" fill="#d0d0d0"/><rect x="147" y="28" width="2" height="6" fill="#d0d0d0"/><rect x="155" y="20" width="2" height="14" fill="#d8d8d8"/><rect x="163" y="28" width="2" height="6" fill="#d0d0d0"/><rect x="171" y="28" width="2" height="6" fill="#d0d0d0"/><rect x="179" y="28" width="2" height="6" fill="#d0d0d0"/><rect x="187" y="28" width="2" height="6" fill="#d0d0d0"/><rect x="197" y="28" width="2" height="6" fill="#d0d0d0"/><rect x="205" y="28" width="2" height="6" fill="#d0d0d0"/><rect x="213" y="28" width="2" height="6" fill="#d0d0d0"/><rect x="221" y="28" width="2" height="6" fill="#d0d0d0"/><rect x="229" y="28" width="2" height="6" fill="#d0d0d0"/><rect x="237" y="20" width="2" height="14" fill="#d8d8d8"/><rect x="245" y="28" width="2" height="6" fill="#d0d0d0"/><rect x="253" y="28" width="2" height="6" fill="#d0d0d0"/><rect x="261" y="28" width="2" height="6" fill="#d0d0d0"/><rect x="269" y="28" width="2" height="6" fill="#d0d0d0"/><rect x="277" y="28" width="2" height="6" fill="#d0d0d0"/><rect x="287" y="28" width="2" height="6" fill="#d0d0d0"/><rect x="295" y="28" width="2" height="6" fill="#d0d0d0"/><rect x="303" y="28" width="2" height="6" fill="#d0d0d0"/><rect x="311" y="28" width="2" height="6" fill="#d0d0d0"/><rect x="319" y="20" width="2" height="14" fill="#d8d8d8"/><rect x="327" y="28" width="2" height="6" fill="#d0d0d0"/><rect x="335" y="28" width="2" height="6" fill="#d0d0d0"/><rect x="343" y="28" width="2" height="6" fill="#d0d0d0"/><rect x="351" y="28" width="2" height="6" fill="#d0d0d0"/><rect x="359" y="28" width="2" height="6" fill="#d0d0d0"/><rect x="367" y="28" width="2" height="6" fill="#d0d0d0"/><rect x="375" y="28" width="2" height="6" fill="#d0d0d0"/><rect x="385" y="28" width="2" height="6" fill="#d0d0d0"/><rect x="393" y="28" width="2" height="6" fill="#d0d0d0"/><rect x="401" y="20" width="2" height="14" fill="#d8d8d8"/><rect x="409" y="28" width="2" height="6" fill="#d0d0d0"/><rect x="417" y="28" width="2" height="6" fill="#d0d0d0"/><rect x="425" y="28" width="2" height="6" fill="#d0d0d0"/><rect x="433" y="28" width="2" height="6" fill="#d0d0d0"/><rect x="441" y="28" width="2" height="6" fill="#d0d0d0"/><rect x="449" y="28" width="2" height="6" fill="#d0d0d0"/><rect x="457" y="28" width="2" height="6" fill="#d0d0d0"/><rect x="465" y="28" width="2" height="6" fill="#d0d0d0"/><rect x="473" y="28" width="2" height="6" fill="#d0d0d0"/><rect x="483" y="20" width="2" height="14" fill="#d8d8d8"/><rect x="491" y="28" width="2" height="6" fill="#d0d0d0"/><rect x="499" y="28" width="2" height="6" fill="#d0d0d0"/><rect x="507" y="28" width="2" height="6" fill="#d0d0d0"/><rect x="515" y="28" width="2" height="6" fill="#d0d0d0"/><rect x="523" y="28" width="2" height="6" fill="#d0d0d0"/><rect x="531" y="28" width="2" height="6" fill="#d0d0d0"/><rect x="539" y="28" width="2" height="6" fill="#d0d0d0"/><rect x="547" y="28" width="2" height="6" fill="#d0d0d0"/><rect x="555" y="28" width="2" height="6" fill="#d0d0d0"/><rect x="563" y="20" width="2" height="14" fill="#d8d8d8"/><rect x="573" y="28" width="2" height="6" fill="#d0d0d0"/><rect x="581" y="28" width="2" height="6" fill="#d0d0d0"/><rect x="589" y="28" width="2" height="6" fill="#d0d0d0"/><rect x="597" y="28" width="2" height="6" fill="#d0d0d0"/><rect x="605" y="28" width="2" height="6" fill="#d0d0d0"/><rect x="613" y="28" width="2" height="6" fill="#d0d0d0"/><rect x="621" y="28" width="2" height="6" fill="#d0d0d0"/><rect x="629" y="28" width="2" height="6" fill="#d0d0d0"/><rect x="637" y="28" width="2" height="6" fill="#d0d0d0"/><rect x="645" y="20" width="2" height="14" fill="#d8d8d8"/><rect x="653" y="28" width="2" height="6" fill="#d0d0d0"/><rect x="661" y="28" width="2" height="6" fill="#d0d0d0"/><rect x="671" y="28" width="2" height="6" fill="#d0d0d0"/><rect x="679" y="28" width="2" height="6" fill="#d0d0d0"/><rect x="687" y="28" width="2" height="6" fill="#d0d0d0"/><rect x="695" y="28" width="2" height="6" fill="#d0d0d0"/><rect x="703" y="28" width="2" height="6" fill="#d0d0d0"/><rect x="711" y="28" width="2" height="6" fill="#d0d0d0"/><rect x="719" y="28" width="2" height="6" fill="#d0d0d0"/><rect x="727" y="20" width="2" height="14" fill="#d8d8d8"/><rect x="735" y="28" width="2" height="6" fill="#d0d0d0"/><rect x="743" y="28" width="2" height="6" fill="#d0d0d0"/><rect x="751" y="28" width="2" height="6" fill="#d0d0d0"/><rect x="759" y="28" width="2" height="6" fill="#d0d0d0"/><rect x="769" y="28" width="2" height="6" fill="#d0d0d0"/><rect x="777" y="28" width="2" height="6" fill="#d0d0d0"/><rect x="785" y="28" width="2" height="6" fill="#d0d0d0"/><rect x="793" y="28" width="2" height="6" fill="#d0d0d0"/><rect x="801" y="28" width="2" height="6" fill="#d0d0d0"/><rect x="809" y="20" width="2" height="26" fill="#d8d8d8"/></svg><div style="left:110px;top:708px;width:2px;height:14px;background:#e8e8e8"></div><div style="left:109px;top:720px;width:10px;height:4px;background:#3c5c3c"></div><svg style="left:100px;top:696px" width="24" height="14" viewBox="0 0 24 14"><path d="M0 0H24L12.0 14Z" fill="#f2951d"/></svg><span style="left:113px;top:679.40px;font-size:17px;color:#f2951d;">1</span><span style="left:112px;top:727.40px;font-size:17px;color:#d4d4d4;letter-spacing:0.4px;">1</span><span style="left:172px;top:727.40px;font-size:17px;color:#d4d4d4;letter-spacing:0.4px;">10</span><span style="left:253px;top:727.40px;font-size:17px;color:#d4d4d4;letter-spacing:0.4px;">20</span><span style="left:335px;top:727.40px;font-size:17px;color:#d4d4d4;letter-spacing:0.4px;">30</span><span style="left:417px;top:727.40px;font-size:17px;color:#d4d4d4;letter-spacing:0.4px;">40</span><span style="left:499px;top:727.40px;font-size:17px;color:#d4d4d4;letter-spacing:0.4px;">50</span><span style="left:581px;top:727.40px;font-size:17px;color:#d4d4d4;letter-spacing:0.4px;">60</span><span style="left:663px;top:727.40px;font-size:17px;color:#d4d4d4;letter-spacing:0.4px;">70</span><span style="left:745px;top:727.40px;font-size:17px;color:#d4d4d4;letter-spacing:0.4px;">80</span><span style="left:827px;top:727.40px;font-size:17px;color:#d4d4d4;letter-spacing:0.4px;">90</span><span style="left:892px;top:727.40px;font-size:17px;color:#d4d4d4;letter-spacing:0.4px;">100</span><div style="left:940px;top:682px;width:96px;height:60px;background:#3a3d44;border-radius:6px"></div><span style="left:787px;width:400px;text-align:center;top:702.40px;font-size:22px;color:#8c8c8c;">100</span><svg style="left:1048px;top:722px" width="18" height="22" viewBox="0 0 18 22"><path d="M1 2L8.5 10L16 2M1 10L8.5 18L16 10" fill="none" stroke="#808080" stroke-width="2"/></svg><span style="left:19px;top:762.40px;font-size:22px;color:#cfcfcf;letter-spacing:0.3px;">Global</span><svg style="left:118px;top:768px" width="11" height="7" viewBox="0 0 11 7"><path d="M0 0H11L5.5 7Z" fill="#c0c0c0"/></svg><div style="left:142px;top:754px;width:2px;height:38px;background:#2a2a2a"></div><div style="left:169px;top:751px;width:34px;height:46px;box-sizing:border-box;border:2px solid #2c2c2c;border-radius:8px;background:#4b4b4b"></div><div style="left:206px;top:751px;width:60px;height:46px;box-sizing:border-box;border:2px solid #2c2c2c;border-radius:8px;background:#4b4b4b"></div><div style="left:270px;top:751px;width:60px;height:46px;box-sizing:border-box;border:2px solid #2c2c2c;border-radius:8px;background:#4b4b4b"></div><div style="left:334px;top:751px;width:61px;height:46px;box-sizing:border-box;border:2px solid #2c2c2c;border-radius:8px;background:#4b4b4b"></div><div style="left:497px;top:751px;width:61px;height:46px;box-sizing:border-box;border:2px solid #2c2c2c;border-radius:8px;background:#4b4b4b"></div><div style="left:562px;top:751px;width:61px;height:46px;box-sizing:border-box;border:2px solid #2c2c2c;border-radius:8px;background:#4b4b4b"></div><div style="left:626px;top:751px;width:60px;height:46px;box-sizing:border-box;border:2px solid #2c2c2c;border-radius:8px;background:#4b4b4b"></div><div style="left:690px;top:751px;width:33px;height:46px;box-sizing:border-box;border:2px solid #2c2c2c;border-radius:8px;background:#4b4b4b"></div><div style="left:184px;top:764px;width:2px;height:17px;background:#d4d4d4"></div><svg style="left:220px;top:760px" width="40" height="28" viewBox="-4 -4 40 28"><path d="M24 0V20L8 10Z" fill="url(#ig)" stroke="#2e2e2e" stroke-width="2.4" paint-order="stroke" stroke-linejoin="miter"/><rect x="0" y="0" width="8" height="19.5" fill="url(#ig)" stroke="#2e2e2e" stroke-width="2.4" paint-order="stroke" stroke-linejoin="miter"/><rect x="2.5" y="1" width="3.5" height="17" fill="#7a7a7a" opacity="0.8"/></svg><svg style="left:284px;top:760px" width="40" height="28" viewBox="-4 -4 40 28"><path d="M18 0V20L0 10Z" fill="url(#ig)" stroke="#2e2e2e" stroke-width="2.4" paint-order="stroke" stroke-linejoin="miter"/><rect x="19.5" y="0" width="4.5" height="19.5" fill="url(#ig)" stroke="#2e2e2e" stroke-width="2.4" paint-order="stroke" stroke-linejoin="miter"/></svg><svg style="left:350px;top:760px" width="40" height="28" viewBox="-4 -4 40 28"><path d="M19.5 0V20L0 10Z" fill="url(#ig)" stroke="#2e2e2e" stroke-width="2.4" paint-order="stroke" stroke-linejoin="miter"/></svg><div style="left:399px;top:752px;width:95px;height:44px;background:#3a3d44;border-radius:5px"></div><span style="left:245px;width:400px;text-align:center;top:764.40px;font-size:22px;color:#f2951d;">1</span><svg style="left:514px;top:760px" width="40" height="28" viewBox="-4 -4 40 28"><path d="M0 0V20L19 10Z" fill="url(#ig)" stroke="#2e2e2e" stroke-width="2.4" paint-order="stroke" stroke-linejoin="miter"/></svg><svg style="left:576px;top:760px" width="40" height="28" viewBox="-4 -4 40 28"><rect x="0" y="0" width="5" height="19.5" fill="url(#ig)" stroke="#2e2e2e" stroke-width="2.4" paint-order="stroke" stroke-linejoin="miter"/><path d="M5.5 0V20L23 10Z" fill="url(#ig)" stroke="#2e2e2e" stroke-width="2.4" paint-order="stroke" stroke-linejoin="miter"/></svg><svg style="left:640px;top:760px" width="40" height="28" viewBox="-4 -4 40 28"><path d="M0 0V20L16 10Z" fill="url(#ig)" stroke="#2e2e2e" stroke-width="2.4" paint-order="stroke" stroke-linejoin="miter"/><rect x="16" y="0" width="8" height="19.5" fill="url(#ig)" stroke="#2e2e2e" stroke-width="2.4" paint-order="stroke" stroke-linejoin="miter"/><rect x="18.5" y="1" width="3.5" height="17" fill="#7a7a7a" opacity="0.8"/></svg><span style="left:505.5px;width:400px;text-align:center;top:762.80px;font-size:21.5px;color:#bcbcbc;">O</span><div style="left:749px;top:753px;width:42px;height:42px;box-sizing:border-box;border:2px solid #2c2c2c;border-radius:8px;background:#4b4b4b"></div><svg style="left:759px;top:768px" width="24" height="15" viewBox="0 0 24 15"><g filter="url(#sh)"><path d="M11 0V12L0 6ZM22 0V12L11 6Z" fill="#a0a0a0"/></g></svg><div style="left:794px;top:754px;width:43px;height:40px;box-sizing:border-box;background:#3a3d44;border:2px solid #2c2c2c;border-radius:5px"></div><span style="left:614px;width:400px;text-align:center;top:764.40px;font-size:22px;color:#d8d8d8;">10</span><div style="left:841px;top:753px;width:42px;height:42px;box-sizing:border-box;border:2px solid #2c2c2c;border-radius:8px;background:#4b4b4b"></div><svg style="left:851px;top:768px" width="24" height="15" viewBox="0 0 24 15"><g filter="url(#sh)"><path d="M0 0V12L11 6ZM11 0V12L22 6Z" fill="#a0a0a0"/></g></svg><svg style="left:952px;top:758px" width="26" height="30" viewBox="0 0 26 30"><path d="M6 12V9a7 7 0 0 1 14 0V12" fill="none" stroke="#a8a8a8" stroke-width="3.6"/><rect x="0" y="10" width="25" height="18" fill="#a8a8a8"/><rect x="11.5" y="15" width="2.5" height="9" fill="#666"/><rect x="10" y="16" width="5.5" height="2.5" fill="#666"/></svg><svg style="left:996px;top:757px" width="34" height="32" viewBox="0 0 34 32"><path d="M13 0.5L23 9L13 17.5Z" fill="#b0b0b0"/><rect x="13" y="0.5" width="2.4" height="19" fill="#a0a0a0"/><path d="M0 19.5H2.2V27H30V19.5H32.2V29.2H0Z" fill="#a8a8a8"/><path d="M7 23H9V28H7ZM15 22H17V28H15ZM23 23H25V28H23Z" fill="#a8a8a8"/></svg><div style="left:1086px;top:682px;width:96px;height:60px;background:#3a3d44;border-radius:6px"></div><span style="left:933px;width:400px;text-align:center;top:702.40px;font-size:22px;color:#8c8c8c;">1</span><div style="left:1194px;top:670px;width:766px;height:6px;background:#8f8f8f"></div><div style="left:1194px;top:680px;width:766px;height:64px;background:#404040"></div><div style="left:1958px;top:680px;width:2px;height:64px;background:#111"></div><svg style="left:1194px;top:680px" width="766" height="64"><rect x="7" y="28" width="2" height="6" fill="#d0d0d0"/><rect x="15" y="28" width="2" height="6" fill="#d0d0d0"/><rect x="23" y="28" width="2" height="6" fill="#d0d0d0"/><rect x="31" y="28" width="2" height="6" fill="#d0d0d0"/><rect x="39" y="28" width="2" height="6" fill="#d0d0d0"/><rect x="45" y="28" width="2" height="6" fill="#d0d0d0"/><rect x="53" y="28" width="2" height="6" fill="#d0d0d0"/><rect x="61" y="28" width="2" height="6" fill="#d0d0d0"/><rect x="69" y="20" width="2" height="14" fill="#d8d8d8"/><rect x="77" y="28" width="2" height="6" fill="#d0d0d0"/><rect x="85" y="28" width="2" height="6" fill="#d0d0d0"/><rect x="91" y="28" width="2" height="6" fill="#d0d0d0"/><rect x="99" y="28" width="2" height="6" fill="#d0d0d0"/><rect x="107" y="28" width="2" height="6" fill="#d0d0d0"/><rect x="115" y="28" width="2" height="6" fill="#d0d0d0"/><rect x="123" y="28" width="2" height="6" fill="#d0d0d0"/><rect x="131" y="28" width="2" height="6" fill="#d0d0d0"/><rect x="137" y="28" width="2" height="6" fill="#d0d0d0"/><rect x="145" y="20" width="2" height="14" fill="#d8d8d8"/><rect x="153" y="28" width="2" height="6" fill="#d0d0d0"/><rect x="161" y="28" width="2" height="6" fill="#d0d0d0"/><rect x="169" y="28" width="2" height="6" fill="#d0d0d0"/><rect x="177" y="28" width="2" height="6" fill="#d0d0d0"/><rect x="183" y="28" width="2" height="6" fill="#d0d0d0"/><rect x="191" y="28" width="2" height="6" fill="#d0d0d0"/><rect x="199" y="28" width="2" height="6" fill="#d0d0d0"/><rect x="207" y="28" width="2" height="6" fill="#d0d0d0"/><rect x="215" y="28" width="2" height="6" fill="#d0d0d0"/><rect x="223" y="20" width="2" height="14" fill="#d8d8d8"/><rect x="229" y="28" width="2" height="6" fill="#d0d0d0"/><rect x="237" y="28" width="2" height="6" fill="#d0d0d0"/><rect x="245" y="28" width="2" height="6" fill="#d0d0d0"/><rect x="253" y="28" width="2" height="6" fill="#d0d0d0"/><rect x="261" y="28" width="2" height="6" fill="#d0d0d0"/><rect x="267" y="28" width="2" height="6" fill="#d0d0d0"/><rect x="275" y="28" width="2" height="6" fill="#d0d0d0"/><rect x="283" y="28" width="2" height="6" fill="#d0d0d0"/><rect x="291" y="28" width="2" height="6" fill="#d0d0d0"/><rect x="299" y="20" width="2" height="14" fill="#d8d8d8"/><rect x="307" y="28" width="2" height="6" fill="#d0d0d0"/><rect x="313" y="28" width="2" height="6" fill="#d0d0d0"/><rect x="321" y="28" width="2" height="6" fill="#d0d0d0"/><rect x="329" y="28" width="2" height="6" fill="#d0d0d0"/><rect x="337" y="28" width="2" height="6" fill="#d0d0d0"/><rect x="345" y="28" width="2" height="6" fill="#d0d0d0"/><rect x="353" y="28" width="2" height="6" fill="#d0d0d0"/><rect x="359" y="28" width="2" height="6" fill="#d0d0d0"/><rect x="367" y="28" width="2" height="6" fill="#d0d0d0"/><rect x="375" y="20" width="2" height="14" fill="#d8d8d8"/><rect x="383" y="28" width="2" height="6" fill="#d0d0d0"/><rect x="391" y="28" width="2" height="6" fill="#d0d0d0"/><rect x="399" y="28" width="2" height="6" fill="#d0d0d0"/><rect x="405" y="28" width="2" height="6" fill="#d0d0d0"/><rect x="413" y="28" width="2" height="6" fill="#d0d0d0"/><rect x="421" y="28" width="2" height="6" fill="#d0d0d0"/><rect x="429" y="28" width="2" height="6" fill="#d0d0d0"/><rect x="437" y="28" width="2" height="6" fill="#d0d0d0"/><rect x="445" y="28" width="2" height="6" fill="#d0d0d0"/><rect x="451" y="20" width="2" height="14" fill="#d8d8d8"/><rect x="459" y="28" width="2" height="6" fill="#d0d0d0"/><rect x="467" y="28" width="2" height="6" fill="#d0d0d0"/><rect x="475" y="28" width="2" height="6" fill="#d0d0d0"/><rect x="483" y="28" width="2" height="6" fill="#d0d0d0"/><rect x="491" y="28" width="2" height="6" fill="#d0d0d0"/><rect x="497" y="28" width="2" height="6" fill="#d0d0d0"/><rect x="505" y="28" width="2" height="6" fill="#d0d0d0"/><rect x="513" y="28" width="2" height="6" fill="#d0d0d0"/><rect x="521" y="28" width="2" height="6" fill="#d0d0d0"/><rect x="529" y="20" width="2" height="14" fill="#d8d8d8"/><rect x="535" y="28" width="2" height="6" fill="#d0d0d0"/><rect x="543" y="28" width="2" height="6" fill="#d0d0d0"/><rect x="551" y="28" width="2" height="6" fill="#d0d0d0"/><rect x="559" y="28" width="2" height="6" fill="#d0d0d0"/><rect x="567" y="28" width="2" height="6" fill="#d0d0d0"/><rect x="575" y="28" width="2" height="6" fill="#d0d0d0"/><rect x="581" y="28" width="2" height="6" fill="#d0d0d0"/><rect x="589" y="28" width="2" height="6" fill="#d0d0d0"/><rect x="597" y="28" width="2" height="6" fill="#d0d0d0"/><rect x="605" y="20" width="2" height="14" fill="#d8d8d8"/><rect x="613" y="28" width="2" height="6" fill="#d0d0d0"/><rect x="621" y="28" width="2" height="6" fill="#d0d0d0"/><rect x="627" y="28" width="2" height="6" fill="#d0d0d0"/><rect x="635" y="28" width="2" height="6" fill="#d0d0d0"/><rect x="643" y="28" width="2" height="6" fill="#d0d0d0"/><rect x="651" y="28" width="2" height="6" fill="#d0d0d0"/><rect x="659" y="28" width="2" height="6" fill="#d0d0d0"/><rect x="667" y="28" width="2" height="6" fill="#d0d0d0"/><rect x="673" y="28" width="2" height="6" fill="#d0d0d0"/><rect x="681" y="20" width="2" height="14" fill="#d8d8d8"/><rect x="689" y="28" width="2" height="6" fill="#d0d0d0"/><rect x="697" y="28" width="2" height="6" fill="#d0d0d0"/><rect x="705" y="28" width="2" height="6" fill="#d0d0d0"/><rect x="713" y="28" width="2" height="6" fill="#d0d0d0"/><rect x="719" y="28" width="2" height="6" fill="#d0d0d0"/><rect x="727" y="28" width="2" height="6" fill="#d0d0d0"/><rect x="735" y="28" width="2" height="6" fill="#d0d0d0"/><rect x="743" y="28" width="2" height="6" fill="#d0d0d0"/><rect x="751" y="28" width="2" height="6" fill="#d0d0d0"/><rect x="757" y="20" width="2" height="26" fill="#d8d8d8"/></svg><div style="left:1194px;top:708px;width:2px;height:14px;background:#e8e8e8"></div><div style="left:1193px;top:720px;width:10px;height:4px;background:#3c5c3c"></div><svg style="left:1184px;top:696px" width="24" height="14" viewBox="0 0 24 14"><path d="M0 0H24L12.0 14Z" fill="#f2951d"/></svg><span style="left:1197px;top:679.40px;font-size:17px;color:#f2951d;">1</span><span style="left:1196px;top:727.40px;font-size:17px;color:#d4d4d4;letter-spacing:0.4px;">1</span><span style="left:1250px;top:727.40px;font-size:17px;color:#d4d4d4;letter-spacing:0.4px;">10</span><span style="left:1326px;top:727.40px;font-size:17px;color:#d4d4d4;letter-spacing:0.4px;">20</span><span style="left:1403px;top:727.40px;font-size:17px;color:#d4d4d4;letter-spacing:0.4px;">30</span><span style="left:1480px;top:727.40px;font-size:17px;color:#d4d4d4;letter-spacing:0.4px;">40</span><span style="left:1557px;top:727.40px;font-size:17px;color:#d4d4d4;letter-spacing:0.4px;">50</span><span style="left:1634px;top:727.40px;font-size:17px;color:#d4d4d4;letter-spacing:0.4px;">60</span><span style="left:1710px;top:727.40px;font-size:17px;color:#d4d4d4;letter-spacing:0.4px;">70</span><span style="left:1787px;top:727.40px;font-size:17px;color:#d4d4d4;letter-spacing:0.4px;">80</span><span style="left:1864px;top:727.40px;font-size:17px;color:#d4d4d4;letter-spacing:0.4px;">90</span><span style="left:1924px;top:727.40px;font-size:17px;color:#d4d4d4;letter-spacing:0.4px;">100</span><div style="left:1972px;top:682px;width:96px;height:60px;background:#3a3d44;border-radius:6px"></div><span style="left:1819px;width:400px;text-align:center;top:702.40px;font-size:22px;color:#8c8c8c;">100</span><svg style="left:2079px;top:722px" width="18" height="22" viewBox="0 0 18 22"><path d="M1 2L8.5 10L16 2M1 10L8.5 18L16 10" fill="none" stroke="#808080" stroke-width="2"/></svg><span style="left:1103px;top:762.40px;font-size:22px;color:#cfcfcf;letter-spacing:0.3px;">Global</span><svg style="left:1202px;top:768px" width="11" height="7" viewBox="0 0 11 7"><path d="M0 0H11L5.5 7Z" fill="#c0c0c0"/></svg><div style="left:1226px;top:754px;width:2px;height:38px;background:#2a2a2a"></div><div style="left:1291px;top:751px;width:34px;height:46px;box-sizing:border-box;border:2px solid #2c2c2c;border-radius:8px;background:#4b4b4b"></div><div style="left:1327px;top:751px;width:61px;height:46px;box-sizing:border-box;border:2px solid #2c2c2c;border-radius:8px;background:#4b4b4b"></div><div style="left:1392px;top:751px;width:61px;height:46px;box-sizing:border-box;border:2px solid #2c2c2c;border-radius:8px;background:#4b4b4b"></div><div style="left:1555px;top:751px;width:61px;height:46px;box-sizing:border-box;border:2px solid #2c2c2c;border-radius:8px;background:#4b4b4b"></div><div style="left:1620px;top:751px;width:60px;height:46px;box-sizing:border-box;border:2px solid #2c2c2c;border-radius:8px;background:#4b4b4b"></div><div style="left:1684px;top:751px;width:33px;height:46px;box-sizing:border-box;border:2px solid #2c2c2c;border-radius:8px;background:#4b4b4b"></div><div style="left:1306px;top:764px;width:2px;height:17px;background:#d4d4d4"></div><svg style="left:1342px;top:760px" width="40" height="28" viewBox="-4 -4 40 28"><path d="M18 0V20L0 10Z" fill="url(#ig)" stroke="#2e2e2e" stroke-width="2.4" paint-order="stroke" stroke-linejoin="miter"/><rect x="19.5" y="0" width="4.5" height="19.5" fill="url(#ig)" stroke="#2e2e2e" stroke-width="2.4" paint-order="stroke" stroke-linejoin="miter"/></svg><svg style="left:1408px;top:760px" width="40" height="28" viewBox="-4 -4 40 28"><path d="M19.5 0V20L0 10Z" fill="url(#ig)" stroke="#2e2e2e" stroke-width="2.4" paint-order="stroke" stroke-linejoin="miter"/></svg><div style="left:1457px;top:752px;width:95px;height:44px;background:#3a3d44;border-radius:5px"></div><span style="left:1303px;width:400px;text-align:center;top:764.40px;font-size:22px;color:#f2951d;">1</span><svg style="left:1572px;top:760px" width="40" height="28" viewBox="-4 -4 40 28"><path d="M0 0V20L19 10Z" fill="url(#ig)" stroke="#2e2e2e" stroke-width="2.4" paint-order="stroke" stroke-linejoin="miter"/></svg><svg style="left:1634px;top:760px" width="40" height="28" viewBox="-4 -4 40 28"><rect x="0" y="0" width="5" height="19.5" fill="url(#ig)" stroke="#2e2e2e" stroke-width="2.4" paint-order="stroke" stroke-linejoin="miter"/><path d="M5.5 0V20L23 10Z" fill="url(#ig)" stroke="#2e2e2e" stroke-width="2.4" paint-order="stroke" stroke-linejoin="miter"/></svg><span style="left:1500px;width:400px;text-align:center;top:762.80px;font-size:21.5px;color:#bcbcbc;">O</span><div style="left:1743px;top:753px;width:42px;height:42px;box-sizing:border-box;border:2px solid #2c2c2c;border-radius:8px;background:#4b4b4b"></div><svg style="left:1753px;top:768px" width="24" height="15" viewBox="0 0 24 15"><g filter="url(#sh)"><path d="M11 0V12L0 6ZM22 0V12L11 6Z" fill="#a0a0a0"/></g></svg><div style="left:1788px;top:754px;width:43px;height:40px;box-sizing:border-box;background:#3a3d44;border:2px solid #2c2c2c;border-radius:5px"></div><span style="left:1608px;width:400px;text-align:center;top:764.40px;font-size:22px;color:#d8d8d8;">10</span><div style="left:1835px;top:753px;width:42px;height:42px;box-sizing:border-box;border:2px solid #2c2c2c;border-radius:8px;background:#4b4b4b"></div><svg style="left:1845px;top:768px" width="24" height="15" viewBox="0 0 24 15"><g filter="url(#sh)"><path d="M0 0V12L11 6ZM11 0V12L22 6Z" fill="#a0a0a0"/></g></svg><svg style="left:1984px;top:758px" width="26" height="30" viewBox="0 0 26 30"><path d="M6 12V9a7 7 0 0 1 14 0V12" fill="none" stroke="#a8a8a8" stroke-width="3.6"/><rect x="0" y="10" width="25" height="18" fill="#a8a8a8"/><rect x="11.5" y="15" width="2.5" height="9" fill="#666"/><rect x="10" y="16" width="5.5" height="2.5" fill="#666"/></svg><svg style="left:2028px;top:757px" width="34" height="32" viewBox="0 0 34 32"><path d="M13 0.5L23 9L13 17.5Z" fill="#b0b0b0"/><rect x="13" y="0.5" width="2.4" height="19" fill="#a0a0a0"/><path d="M0 19.5H2.2V27H30V19.5H32.2V29.2H0Z" fill="#a8a8a8"/><path d="M7 23H9V28H7ZM15 22H17V28H15ZM23 23H25V28H23Z" fill="#a8a8a8"/></svg><div style="left:0px;top:804px;width:2104px;height:2px;background:#000"></div><div style="left:0px;top:806px;width:2104px;height:2px;background:#5c5c5c"></div><div style="left:0px;top:808px;width:2106px;height:50px;background:#363636"></div><div style="left:0px;top:814px;width:16px;height:20px;background:#b5b5b5"></div><div style="left:0px;top:832px;width:16px;height:2px;background:#a4a4a4"></div><div style="left:0px;top:834px;width:16px;height:12px;background:#828282"></div><div style="left:16px;top:814px;width:2px;height:32px;background:#707070"></div><div style="left:18px;top:814px;width:14px;height:32px;background:#4e4e4e"></div><div style="left:262px;top:817px;width:232px;height:40px;box-sizing:border-box;background:#353535;border:2px solid #262626;border-radius:5px 5px 0 0"></div><span style="left:288px;top:824.40px;font-size:22px;color:#c8c8c8;letter-spacing:0.18px;">Curve Editor</span><svg style="left:444px;top:822.5px" width="28" height="28" viewBox="0 0 28 28"><circle cx="14" cy="14" r="12" fill="#444444"/><path d="M8.5 8.5L19.5 19.5M19.5 8.5L8.5 19.5" stroke="#6e6e6e" stroke-width="3" fill="none"/></svg><div style="left:492px;top:817px;width:218px;height:40px;box-sizing:border-box;background:#353535;border:2px solid #262626;border-radius:5px 5px 0 0"></div><span style="left:516px;top:824.40px;font-size:22px;color:#c8c8c8;letter-spacing:0.45px;">Dope Sheet</span><svg style="left:664px;top:822.5px" width="28" height="28" viewBox="0 0 28 28"><circle cx="14" cy="14" r="12" fill="#444444"/><path d="M8.5 8.5L19.5 19.5M19.5 8.5L8.5 19.5" stroke="#6e6e6e" stroke-width="3" fill="none"/></svg><div style="left:41px;top:810px;width:222px;height:48px;box-sizing:border-box;background:#484848;border:2px solid #2a2a2a;border-bottom:none;border-radius:5px 5px 0 0"></div><span style="left:63px;top:822.40px;font-size:22px;color:#f4c88c;letter-spacing:0.55px;">Node Graph</span><svg style="left:216px;top:820px" width="28" height="28" viewBox="0 0 28 28"><circle cx="14" cy="14" r="12" fill="#434343"/><path d="M8.5 8.5L19.5 19.5M19.5 8.5L8.5 19.5" stroke="#868686" stroke-width="3" fill="none"/></svg><div style="left:0px;top:858px;width:2106px;height:519px;background:#3c3c3c"></div><svg style="left:0;top:858px" width="2106" height="519" viewBox="0 858 2106 519" font-family='"DejaVu Sans","Liberation Sans",sans-serif'><rect x="990" y="882" width="160" height="132" fill="#2c2c2c"/><rect x="992" y="884" width="156" height="128" fill="#cdcdcd"/><rect x="992" y="884" width="156" height="2" fill="#e8e8e8"/><rect x="992" y="884" width="2" height="88" fill="#e8e8e8"/><rect x="1146" y="884" width="2" height="88" fill="#e8e8e8"/><rect x="990" y="1012" width="160" height="2" fill="#5a5a5a"/><rect x="990" y="884" width="2" height="130" fill="#5a5a5a"/><rect x="994" y="886" width="152" height="86" fill="#000"/><text x="1070" y="996" font-size="19" fill="#000" text-anchor="middle" letter-spacing="0.12">ColorWheel1</text><rect x="996" y="1004" width="14" height="6" fill="#f00"/><rect x="1010" y="1004" width="14" height="6" fill="#0f0"/><rect x="1024" y="1004" width="16" height="6" fill="#00f"/><rect x="1040" y="1004" width="16" height="6" fill="#fff"/><path d="M1062 1014H1078L1070 1026Z" fill="#00ff00"/><path d="M1062 1066H1078L1070 1078Z" fill="#00ff00"/><rect x="990" y="1026" width="160" height="40" fill="#2c2c2c"/><rect x="992" y="1028" width="156" height="36" fill="#a67cab"/><rect x="990" y="1064" width="160" height="2" fill="#4e3852"/><rect x="990" y="1028" width="2" height="38" fill="#4e3852"/><text x="1071.5" y="1052" font-size="19" fill="#000" text-anchor="middle" letter-spacing="0.2">Transform1</text><rect x="996" y="1056" width="14" height="6" fill="#f00"/><rect x="1010" y="1056" width="14" height="6" fill="#0f0"/><rect x="1024" y="1056" width="16" height="6" fill="#00f"/><rect x="1040" y="1056" width="16" height="6" fill="#fff"/><rect x="990" y="1078" width="160" height="40" fill="#2c2c2c"/><rect x="992" y="1080" width="156" height="36" fill="#a67cab"/><rect x="990" y="1116" width="160" height="2" fill="#4e3852"/><rect x="990" y="1080" width="2" height="38" fill="#4e3852"/><text x="1071.5" y="1104" font-size="19" fill="#000" text-anchor="middle" letter-spacing="0.7">Crop1</text><rect x="996" y="1108" width="14" height="6" fill="#f00"/><rect x="1010" y="1108" width="14" height="6" fill="#0f0"/><rect x="1024" y="1108" width="16" height="6" fill="#00f"/><rect x="1040" y="1108" width="16" height="6" fill="#fff"/><rect x="1068" y="1118" width="4" height="104" fill="#00ff00"/><path d="M1062 1218H1078L1070 1242Z" fill="#00ff00"/><rect x="990" y="1242" width="160" height="40" fill="#2a2a2a"/><rect x="992" y="1244" width="156" height="36" fill="#cdcdcd"/><rect x="990" y="1280" width="160" height="2" fill="#666"/><rect x="990" y="1244" width="2" height="38" fill="#666"/><text x="1069.5" y="1268" font-size="19" fill="#000" text-anchor="middle" letter-spacing="0.55">ColorCarpet1</text><path d="M1150 1098H1352" stroke="#000" stroke-width="4" stroke-dasharray="2 6" fill="none"/><path d="M1364 1090V1106L1382 1098ZM1380 1090V1106L1386 1098Z" fill="#000"/><text x="1359" y="1110" font-size="22" fill="#00ff00" text-anchor="middle" letter-spacing="0">1</text><path d="M1385 1098L1392 1079H1544L1551 1098Z" fill="#262626"/><path d="M1385 1098L1392 1118H1544L1551 1098Z" fill="#707070"/><path d="M1387 1098L1393.5 1081H1542.5L1549 1098L1542.5 1116H1393.5Z" fill="#cdcdcd"/><text x="1467" y="1104" font-size="19" fill="#000" text-anchor="middle" letter-spacing="0.2">Viewer2</text><path d="M990 1262H850" stroke="#00ff00" stroke-width="4" stroke-dasharray="2 6" fill="none"/><path d="M838 1254V1270L816 1262Z" fill="#00ff00"/><text x="845" y="1274" font-size="22" fill="#fff" text-anchor="middle" letter-spacing="0">1</text><path d="M646 1255V1269L653 1262Z" fill="#000"/><path d="M652 1262L658 1243H810L816 1262L810 1281H658Z" fill="#333"/><path d="M654 1262L659.5 1245H808.5L814 1262L808.5 1281H659.5Z" fill="#c8c8c8"/><path d="M658.5 1262L663 1249H805L809.5 1262L805 1277H663Z" fill="#00ff00"/><text x="733.5" y="1268" font-size="19" fill="#000" text-anchor="middle" letter-spacing="0.2">Viewer1</text></svg><div style="left:994px;top:886px;width:152px;height:86px;overflow:hidden"><div style="left:32.5px;top:-0.5px;width:87px;height:87px;border-radius:50%;background:radial-gradient(circle 43.5px at 50% 50%,#fff 0,rgba(255,255,255,0) 100%),conic-gradient(from 90deg,#f00,#ff0,#0f0,#0ff,#00f,#f0f,#f00)"></div></div></div>
</body></html>
